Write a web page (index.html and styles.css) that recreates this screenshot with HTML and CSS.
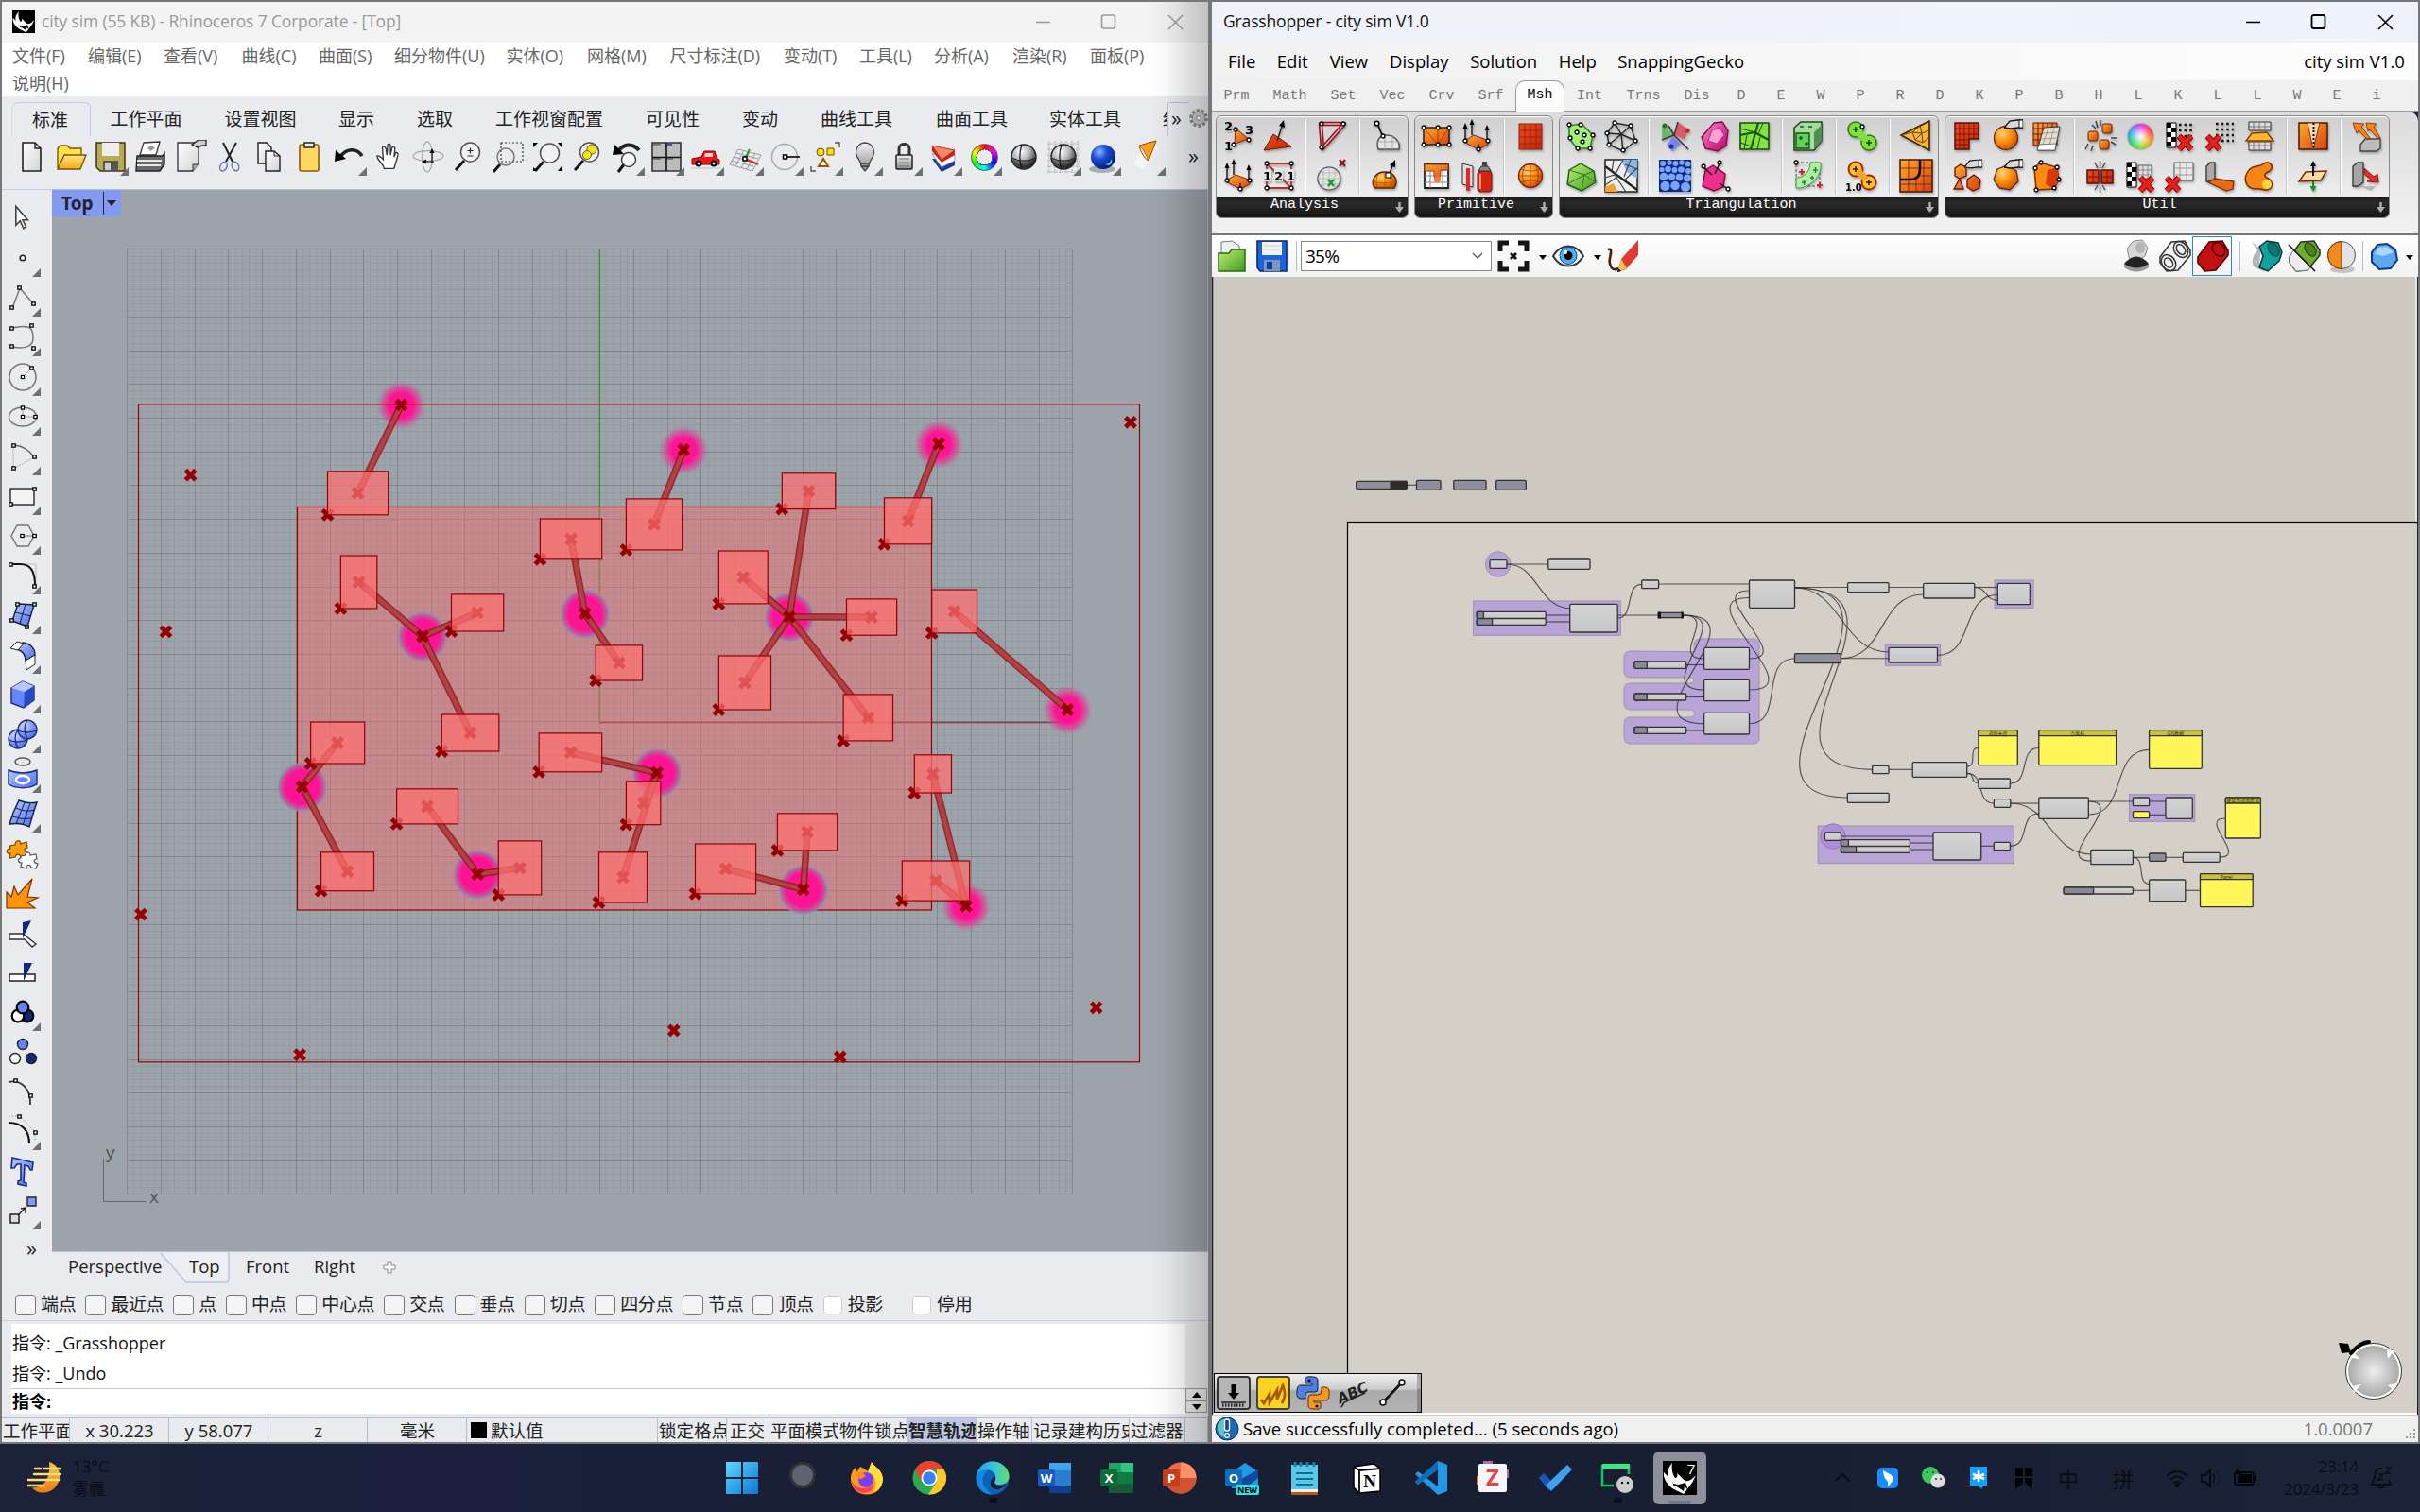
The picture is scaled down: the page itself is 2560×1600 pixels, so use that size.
FILE: index.html
```html
<!DOCTYPE html>
<html lang="zh-CN">
<head>
<meta charset="utf-8">
<title>Rhinoceros 7 + Grasshopper</title>
<link rel="stylesheet" href="styles.css">
</head>
<body>
<svg class="sprite" aria-hidden="true">
<defs>
<linearGradient id="gPage" x1="0" y1="0" x2="1" y2="1"><stop offset="0" stop-color="#fff"/><stop offset="1" stop-color="#d2d3d3"/></linearGradient>
<linearGradient id="gGold" x1="0" y1="0" x2="0" y2="1"><stop offset="0" stop-color="#ffe680"/><stop offset="1" stop-color="#f3a81a"/></linearGradient>
<linearGradient id="gOr" x1="0" y1="0" x2="1" y2="1"><stop offset="0" stop-color="#ffab2e"/><stop offset="1" stop-color="#d8400c"/></linearGradient>
<linearGradient id="gRed" x1="0" y1="0" x2="1" y2="1"><stop offset="0" stop-color="#f04a10"/><stop offset="1" stop-color="#c42a04"/></linearGradient>
<linearGradient id="gMetal" x1="0" y1="0" x2="0" y2="1"><stop offset="0" stop-color="#f2f2f2"/><stop offset="1" stop-color="#8d8d8d"/></linearGradient>
<linearGradient id="gBlue" x1="0" y1="0" x2="1" y2="1"><stop offset="0" stop-color="#b6c6ff"/><stop offset="1" stop-color="#4a6ef0"/></linearGradient>
<linearGradient id="gGreen" x1="0" y1="0" x2="1" y2="1"><stop offset="0" stop-color="#bff07a"/><stop offset="1" stop-color="#3f9c1e"/></linearGradient>
<linearGradient id="gPink" x1="0" y1="0" x2="1" y2="1"><stop offset="0" stop-color="#ff8cc8"/><stop offset="1" stop-color="#b30066"/></linearGradient>
<linearGradient id="gWin" x1="0" y1="0" x2="1" y2="1"><stop offset="0" stop-color="#5fd6ff"/><stop offset="1" stop-color="#0a78d4"/></linearGradient>
<linearGradient id="gMoon" x1="0" y1="0" x2="0" y2="1"><stop offset="0" stop-color="#f6c544"/><stop offset="1" stop-color="#f07a16"/></linearGradient>
<linearGradient id="gEdge" x1="0" y1="0" x2="1" y2="0"><stop offset="0" stop-color="#1f9be4"/><stop offset=".5" stop-color="#35c3e8"/><stop offset="1" stop-color="#66e05a"/></linearGradient>
<radialGradient id="sGrey" cx=".38" cy=".28" r=".72"><stop offset="0" stop-color="#fff"/><stop offset=".5" stop-color="#b5b5b5"/><stop offset="1" stop-color="#2a2a2a"/></radialGradient>
<radialGradient id="sBlue" cx=".35" cy=".3" r=".75"><stop offset="0" stop-color="#8fb4ff"/><stop offset=".4" stop-color="#1c4fd6"/><stop offset="1" stop-color="#041a70"/></radialGradient>
<radialGradient id="sOr" cx=".35" cy=".3" r=".75"><stop offset="0" stop-color="#ffd27a"/><stop offset=".45" stop-color="#ff9712"/><stop offset="1" stop-color="#c95000"/></radialGradient>
<radialGradient id="sPeri" cx=".35" cy=".3" r=".8"><stop offset="0" stop-color="#d0daff"/><stop offset="1" stop-color="#3a5ce0"/></radialGradient>

<symbol id="rhino" viewBox="0 0 36 36"><path d="M0 0h36v36H0z"/><path fill="#fff" d="M10 2C5 8 4 13 6 17L1 12c-1 6 3 12 9 17l12 6 9-12 4-8c-4 4-7 7-11 6-3-1-5-5-9-8 1 3 0 5-2 5-3-4-4-10-3-16z"/><path d="m9 20 3 7 4-2-5-1zM13 26l9 6 1-5 4 4-3-8z"/></symbol>
<symbol id="new" viewBox="0 0 36 36"><path d="M9 3h13l6 6v24H9z" fill="url(#gPage)" stroke="#222" stroke-width="1.6"/><path d="M22 3v6h6" fill="none" stroke="#222" stroke-width="1.4"/></symbol>
<symbol id="open" viewBox="0 0 36 36"><path d="M4 30V9l3-3h7l3 3h12v6" fill="#ffe14a" stroke="#7a5500" stroke-width="1.4"/><path d="M4 31 11 16h23l-6 15z" fill="url(#gGold)" stroke="#7a5500" stroke-width="1.4"/></symbol>
<symbol id="save" viewBox="0 0 36 36"><path d="M3 3h30v30H7l-4-4z" fill="#b8ab52" stroke="#3d3510" stroke-width="1.5"/><path d="M9 3h18v14H9z" fill="#eee"/><path d="M10 22h16v11H10z" fill="#565656"/><path d="M12 24h6v8h-6z" fill="#ccc"/></symbol>
<symbol id="print" viewBox="0 0 36 36"><path d="m11 3 17-1-4 14H7z" fill="#fff" stroke="#333" stroke-width="1.3"/><path d="m15 8 5-2 3 3-5 3z" fill="#999"/><path d="M4 17h27l2-3v12l-5 7H3z" fill="#6a6a6a" stroke="#222" stroke-width="1.4"/><path d="M4 22h26M4 27h25" stroke="#e7e7e7" stroke-width="2"/></symbol>
<symbol id="notes" viewBox="0 0 36 36"><path d="M5 3h22v22l-6 8H5z" fill="url(#gPage)" stroke="#333" stroke-width="1.3"/><path d="M21 33v-7h6" fill="#aaa" stroke="#333"/><path d="m20 5 7-5h8v6h-4l-5 2z" fill="#ccc" stroke="#222" stroke-width="1.3"/></symbol>
<symbol id="cut" viewBox="0 0 36 36"><path d="m11 3 10 20M25 3 14 23" stroke="#222" stroke-width="2"/><ellipse cx="11.500" cy="28" rx="3.500" ry="5" transform="rotate(25 11 28)" fill="none" stroke="#6878b0" stroke-width="1.500"/><ellipse cx="24" cy="28" rx="3.500" ry="5" transform="rotate(-25 24 28)" fill="none" stroke="#6878b0" stroke-width="1.500"/></symbol>
<symbol id="copy" viewBox="0 0 36 36"><path d="M6 3h9l5 5v17H6z" fill="url(#gPage)" stroke="#222" stroke-width="1.4"/><path d="M14 12h9l6 5v16H14z" fill="url(#gPage)" stroke="#222" stroke-width="1.4"/><path d="M23 12v5h6" fill="none" stroke="#222"/></symbol>
<symbol id="paste" viewBox="0 0 36 36"><rect x="8" y="5" width="20" height="28" rx="2" fill="#ffd765" stroke="#8a5c00" stroke-width="1.6"/><path d="M13 8V3h10v5z" fill="#eee" stroke="#222" stroke-width="1.4"/></symbol>
<symbol id="undo" viewBox="0 0 36 36"><path d="M9 18C15 9 26 8 32 17" fill="none" stroke="#222" stroke-width="3.600"/><path d="m3 23 1-12 11 9z"/></symbol>
<symbol id="hand" viewBox="0 0 36 36"><path d="M12 32c-1-6-7-8-8-14 3-1 5 2 7 4l-1-14c2-2 3 0 4 2l1 7 1-12c2-1 3 0 3 2v10l2-9c2-1 3 0 3 2l-1 9 2-5c2 0 3 1 2 4-1 6-3 9-4 14z" transform="translate(2 0) scale(.95)" fill="#fff" stroke="#333" stroke-width="1.400"/></symbol>
<symbol id="orbit" viewBox="0 0 36 36"><g fill="none" stroke="#aaa" stroke-width="1.300"><ellipse cx="18" cy="17" rx="16" ry="5.500"/><ellipse cx="17" cy="18" rx="5.500" ry="16"/></g><path d="M22 13v12M15 23h9" stroke="#111" stroke-width="1.200"/><path d="m22 9 2.500 5h-5zM11 23l5-2.500v5z"/></symbol>
<symbol id="mag" viewBox="0 0 36 36"><path d="M14 22 5 32" stroke="#111" stroke-width="2.800"/><circle cx="20.500" cy="13" r="10" fill="#f2f2f4" stroke="#555" stroke-width="1.500"/></symbol>
<symbol id="zoomd" viewBox="0 0 36 36"><use href="#mag"/><path d="M17.500 11.500h6M20.500 8.500v6M17.500 17h6" stroke="#222" stroke-width="1.200"/></symbol>
<symbol id="zoomw" viewBox="0 0 36 36"><path d="M11 3h23v20H11z" fill="none" stroke="#333" stroke-width="1.200" stroke-dasharray="2 2"/><path d="M10 26 3 34" stroke="#111" stroke-width="2.800"/><circle cx="16" cy="18" r="9" fill="none" stroke="#777" stroke-width="1.500"/></symbol>
<symbol id="zoome" viewBox="0 0 36 36"><use href="#mag" transform="translate(0 1)"/><path d="M3 8V3h5zM29 3h4v5zM3 29v4h5zM29 33h4v-5z"/></symbol>
<symbol id="zooms" viewBox="0 0 36 36"><use href="#mag"/><circle cx="23" cy="10" r="5" fill="#ffe600" stroke="#555"/><circle cx="18" cy="16" r="4.500" fill="#ffe600" stroke="#555"/></symbol>
<symbol id="zoomu" viewBox="0 0 36 36"><path d="M9 12C15 4 24 3 31 11" fill="none" stroke="#222" stroke-width="4"/><path d="M3 16 5 5l10 10z"/><path d="m15 26-6 8" stroke="#111" stroke-width="3"/><circle cx="20" cy="21" r="7.500" fill="#fff" stroke="#444" stroke-width="1.500"/></symbol>
<symbol id="grid4" viewBox="0 0 36 36"><path d="M3 3h30v30H3z" fill="#bcbcbc" stroke="#333" stroke-width="1.600"/><path d="M18 3v30M3 18.500h30" stroke="#111" stroke-width="1.600"/><path d="M4 5h8M4 20h8M19 20h6" stroke="#333" stroke-width="1.200"/><path d="M19 5h5" stroke="#2030c0" stroke-width="1.600"/></symbol>
<symbol id="car" viewBox="0 0 36 36"><path d="M3 26v-6l10-2 3-6h11l2 7 3 2v5z" fill="#ee1616" stroke="#880000"/><circle cx="10" cy="25" r="3.500"/><circle cx="26" cy="25" r="3.500"/><circle cx="10" cy="25" r="1.500" fill="#ddd"/><circle cx="26" cy="25" r="1.500" fill="#ddd"/><path d="M17 14h8v4h-9z" fill="#ffd0d0"/><path d="M2 30h32" stroke="#ccc" stroke-width="1.500"/></symbol>
<symbol id="cplane" viewBox="0 0 36 36"><path d="m10 10 24 6-9 17L1 26zM8 14l23 6M5 18l23 6M3 22l23 6M16 11 7 28M22 13l-9 17M28 14l-9 17" fill="none" stroke="#999"/><path d="m17 20 5-10" stroke="#2b9a2b" stroke-width="2"/><path d="m17 20 14 6" stroke="#d22" stroke-width="2"/><path d="M15 18h4v4h-4z" fill="#fff" stroke="#000" stroke-width="1.500"/></symbol>
<symbol id="cirr" viewBox="0 0 36 36"><circle cx="17" cy="18" r="13.500" fill="none" stroke="#aaa" stroke-width="1.500"/><path d="M19 18h14" stroke="#000" stroke-width="1.600"/><path d="M15.500 16h4v4h-4z" fill="#fff" stroke="#000" stroke-width="1.500"/></symbol>
<symbol id="sel" viewBox="0 0 36 36"><path d="M28 3h5v5M3 28v5h5" fill="none" stroke="#555" stroke-width="1.400"/><circle cx="13" cy="13" r="4" fill="#ffe000" stroke="#7a4a00"/><path d="M20 9h7v7h-7z" fill="#ffe000" stroke="#7a4a00"/><path d="m16 20 5 8H11z" fill="#fff" stroke="#a05000" stroke-width="2"/></symbol>
<symbol id="bulb" viewBox="0 0 36 36"><path d="M18 3a10 10 0 0 1 9 13c-1 4-5 6-5 12l-4 5-4-5c0-6-4-8-5-12A10 10 0 0 1 18 3z" fill="url(#gMetal)" stroke="#444" stroke-width="1.300"/><path d="M14 25h8M14 28h8" stroke="#333" stroke-width="1.400"/></symbol>
<symbol id="lock" viewBox="0 0 36 36"><path d="M12 16V9c0-6 11-6 11 0v7" fill="none" stroke="#333" stroke-width="3"/><rect x="9" y="16" width="17" height="15" rx="1" fill="url(#gMetal)" stroke="#222" stroke-width="1.500"/><path d="M12 20h11M12 24h11M12 28h11" stroke="#777"/></symbol>
<symbol id="layers" viewBox="0 0 36 36"><path d="m5 20 10 14 14-7v-6z" fill="#1a3ba8"/><path d="m5 15 10 14 14-7v-6z" fill="#fff" stroke="#888" stroke-width=".8"/><path d="m5 6 24 5v5l-14 8L5 12z" fill="#c22"/><path d="m5 6 24 5-14 10z" fill="#ff8660" stroke="#a22" stroke-width=".8"/></symbol>
<symbol id="sph" viewBox="0 0 36 36"><circle cx="18" cy="18" r="13" fill="url(#sGrey)" stroke="#222" stroke-width="1.400"/><path d="M5 19c8 4 18 4 26 0M16 5c-3 9-3 17 0 26" fill="none" stroke="#222" stroke-width="1.300"/><path d="M5.500 20c8 4 17 4 25 0a13 13 0 0 1-25 0z" fill="#0005"/></symbol>
<symbol id="sphg" viewBox="0 0 36 36"><path d="M1 4h34M1 10h34M1 16h34M1 22h34M1 28h34M1 34h34M3 1v34M9 1v34M15 1v34M21 1v34M27 1v34M33 1v34" stroke="#aaa" stroke-dasharray="2 1"/><use href="#sph"/></symbol>
<symbol id="sphb" viewBox="0 0 36 36"><ellipse cx="17" cy="31" rx="14" ry="4" fill="#0004"/><circle cx="18" cy="18" r="13" fill="url(#sBlue)"/><path d="M20 26c4 0 6-3 7-6 1 6-2 8-7 6z" fill="#7fd0ff"/></symbol>
<symbol id="spot" viewBox="0 0 36 36"><path d="M8 28 25 4" stroke="#fff8" stroke-width="12"/><path d="m9 6 18-5-8 21c-5-3-8-9-10-16z" fill="#ff9d1e" stroke="#8a4a00"/><path d="M9 6q5 4 10 16c-5-3-8-9-10-16z" fill="#fff" stroke="#8a4a00" stroke-width=".8"/></symbol>

<symbol id="arrow" viewBox="0 0 36 36"><path d="M12 6v22l5-5 4 9 3-2-4-8h6z" transform="scale(.9)" fill="#fff" stroke="#444" stroke-width="1.800"/></symbol>
<symbol id="pt" viewBox="0 0 36 36"><circle cx="18" cy="18" r="2.800" fill="#fff" stroke="#222" stroke-width="1.600"/></symbol>
<symbol id="h" viewBox="0 0 5 5"><path d="M.8.8h3.400v3.400H.8z" fill="#fff" stroke="#000" stroke-width="1.300"/></symbol>
<symbol id="pline" viewBox="0 0 36 36"><path d="M7 29 15 8l14 16" fill="none" stroke="#777" stroke-width="1.500"/><use href="#h" x="4" y="26" width="5" height="5"/><use href="#h" x="12" y="5" width="5" height="5"/><use href="#h" x="27" y="22" width="5" height="5"/></symbol>
<symbol id="crv" viewBox="0 0 36 36"><path d="M7 8c22-5 22 3 22 11s-8 12-22 9" fill="none" stroke="#777" stroke-width="1.500"/><use href="#h" x="4" y="6" width="5" height="5"/><use href="#h" x="25" y="3" width="5" height="5"/><use href="#h" x="4" y="25" width="5" height="5"/><use href="#h" x="27" y="27" width="5" height="5"/></symbol>
<symbol id="circ" viewBox="0 0 36 36"><circle cx="18" cy="18" r="14" fill="none" stroke="#777" stroke-width="1.500"/><path d="m18 18 8-8" stroke="#aaa"/><use href="#h" x="15.500" y="15.500" width="5" height="5"/><use href="#h" x="25" y="6" width="5" height="5"/></symbol>
<symbol id="ell" viewBox="0 0 36 36"><ellipse cx="18" cy="18" rx="14.500" ry="10" fill="none" stroke="#777" stroke-width="1.500"/><path d="M18 8v10h14" fill="none" stroke="#aaa"/><use href="#h" x="15.500" y="15.500" width="5" height="5"/><use href="#h" x="15.500" y="6" width="5" height="5"/><use href="#h" x="29" y="15.500" width="5" height="5"/></symbol>
<symbol id="arc" viewBox="0 0 36 36"><path d="M9 6c10 1 16 5 21 13" fill="none" stroke="#666" stroke-width="1.500"/><path d="M8 6v25l22-12" fill="none" stroke="#bbb"/><use href="#h" x="6" y="4" width="5" height="5"/><use href="#h" x="28" y="16" width="5" height="5"/><use href="#h" x="6" y="28" width="5" height="5"/></symbol>
<symbol id="rect" viewBox="0 0 36 36"><path d="M5 10h25v17H5z" fill="#f4f4f4" stroke="#333" stroke-width="1.500"/><use href="#h" x="28" y="8" width="5" height="5"/><use href="#h" x="3" y="24" width="5" height="5"/></symbol>
<symbol id="poly" viewBox="0 0 36 36"><path d="m6 18 6-11h12l6 11-6 11H12z" fill="none" stroke="#777" stroke-width="1.500"/><path d="M18 18h12" stroke="#777"/><use href="#h" x="15" y="15.500" width="5" height="5"/><use href="#h" x="28" y="15.500" width="5" height="5"/></symbol>
<symbol id="fil" viewBox="0 0 36 36"><path d="M6 6h26v24" fill="none" stroke="#bbb"/><path d="M6 6h9c12 0 16 8 16 23" fill="none" stroke="#111" stroke-width="2"/><use href="#h" x="3" y="4" width="5" height="5"/><use href="#h" x="28" y="27" width="5" height="5"/></symbol>
<symbol id="srf" viewBox="0 0 36 36"><path d="m13 6 17 1-7 23-16-6z" fill="url(#gBlue)" stroke="#123" stroke-width="1.400"/><path d="m21 6-6 21M10 15l17 4" stroke="#124"/><use href="#h" x="10" y="4" width="5" height="5"/><use href="#h" x="28" y="4" width="5" height="5"/><use href="#h" x="4" y="21" width="5" height="5"/><use href="#h" x="20" y="28" width="5" height="5"/></symbol>
<symbol id="srf2" viewBox="0 0 36 36"><path d="M18 5c8 1 13 6 13 13l-10 6c0-6-3-10-9-12z" fill="url(#gBlue)" stroke="#222" stroke-width="1.400"/><path d="m12 4 7 2-6 7-8-2z" fill="#fff" stroke="#222"/><path d="m21 24 10-6v10l-9 6z" fill="#fff" stroke="#222"/></symbol>
<symbol id="box" viewBox="0 0 36 36"><path d="m6 11 12-7 12 5v15l-11 8-13-5z" fill="#6584ff" stroke="#1b2c7d" stroke-width="1.400"/><path d="m6 11 12-7 12 5-10 6z" fill="#b8c6ff"/><path d="m20 15 10-6v15l-11 8z" fill="#2947c4"/></symbol>
<symbol id="bool" viewBox="0 0 36 36"><g stroke="#1b2c7d" stroke-width="1.300"><circle cx="13" cy="23" r="10" fill="url(#sPeri)"/><circle cx="23" cy="13" r="10" fill="url(#sPeri)"/><path d="M13 13q-6 9 0 20M3 24q9 4 20 0M23 3q-6 9 0 20M13 14q9 4 20 0" fill="none"/></g></symbol>
<symbol id="pipe" viewBox="0 0 36 36"><ellipse cx="18" cy="5" rx="8" ry="4" fill="none" stroke="#555" stroke-width="1.500"/><path d="M3 14c9 4 21 4 30 0v15c-9 5-21 5-30 0z" fill="url(#gBlue)" stroke="#1b2c7d" stroke-width="1.400"/><ellipse cx="18" cy="24" rx="7" ry="4" fill="#6584ff" stroke="#fff" stroke-width="2.400"/></symbol>
<symbol id="msh" viewBox="0 0 36 36"><path d="M14 4q10 4 19 2l-3 9-5 17q-9-5-21-3l4-12z" fill="url(#gBlue)" stroke="#123" stroke-width="1.400"/><path d="M20 6 11 29M26 7l-8 23M11 12q10 5 20 2M7 21q10 4 21 2" fill="none" stroke="#124"/></symbol>
<symbol id="puz" viewBox="0 0 36 36"><path d="m4 10 6-1c0-5 6-6 6-1l6-2 1 6c-4 0-4 5 0 5l-1 5-6 1c0-5-5-5-6-1l-6 1 1-5c-5 1-5-5 0-5z" fill="#ff9d0a" stroke="#6b4300" stroke-width="1.200"/><path d="m16 21 5-1c0-4 5-4 5 0l6-1 1 5c-4 0-4 4 1 5l-2 5-5-1c-1-4-6-3-5 1l-6-2 1-4c-4 0-5-4-1-5z" fill="#fff" stroke="#555" stroke-width="1.200"/></symbol>
<symbol id="expl" viewBox="0 0 36 36"><path d="M1 34V17l5 5 3-11 4 9L28 3l-5 19 11 1-11 5 8 6z" fill="#ff9208" stroke="#7a3000" stroke-width="1.200"/></symbol>
<symbol id="trim" viewBox="0 0 36 36"><path d="M4 19h14l14 11-4 3-8-8H4z" fill="#fff" stroke="#333" stroke-width="1.400"/><path d="M18 24V7l9-2z" fill="#10287c"/></symbol>
<symbol id="split" viewBox="0 0 36 36"><path d="M4 20h27v7H4z" fill="#fff" stroke="#222" stroke-width="1.500"/><path d="M19 27V8h9z" fill="#10287c"/></symbol>
<symbol id="uni" viewBox="0 0 36 36"><g stroke="#000" stroke-width="2.200"><circle cx="23" cy="22" r="6.300" fill="#10287c"/><circle cx="13" cy="22" r="6.300" fill="#fff"/><circle cx="18" cy="13" r="6.300" fill="#6584ff"/></g></symbol>
<symbol id="dots" viewBox="0 0 36 36"><g stroke="#222" stroke-width="1.400"><circle cx="27" cy="25" r="5.500" fill="#10287c"/><circle cx="10" cy="25" r="5.500" fill="#fff"/><circle cx="18" cy="10" r="5.500" fill="#6584ff"/></g></symbol>
<symbol id="pts" viewBox="0 0 36 36"><path d="M3 8c14-3 24 8 23 24" fill="none" stroke="#333" stroke-width="1.800"/><use href="#h" x="8" y="4" width="5" height="5"/><use href="#h" x="24" y="20" width="5" height="5"/></symbol>
<symbol id="pts2" viewBox="0 0 36 36"><path d="M3 9c14 0 22 8 22 22" fill="none" stroke="#111" stroke-width="2.200"/><path d="M3 2h12l16 17v8" fill="none" stroke="#888" stroke-dasharray="1.500 2"/><use href="#h" x="12" y="0" width="5" height="5"/><use href="#h" x="29" y="17" width="5" height="5"/></symbol>
<symbol id="txt" viewBox="0 0 36 36"><path d="m7 4 22 5-1 8h-2l-2-4-4-1-1 18 3 1v3L13 32v-3l3-1V11h-4l-3 4H6z" fill="url(#gBlue)" stroke="#1b2c7d" stroke-width="1.600"/></symbol>
<symbol id="move" viewBox="0 0 36 36"><path d="M23 4h9v9h-9z" fill="#7f99ff" stroke="#222" stroke-width="1.400"/><path d="M5 22h9v9H5z" fill="#ddd" stroke="#222" stroke-width="1.500"/><path d="m13 23 8-8m-5 1 5-1v6" fill="none" stroke="#222" stroke-width="1.400"/></symbol>

<symbol id="n" viewBox="0 0 6 6"><circle cx="3" cy="3" r="2" fill="#fff" stroke="#000" stroke-width="1.300"/></symbol>
<symbol id="pen" viewBox="0 0 20 12"><path d="m0 9 6-7 8-1h6v8h-5l-8 1z" fill="#d8d8d8" stroke="#111" stroke-width="1.300"/><path d="M16 1h4v8h-4z" fill="#fff" stroke="#111"/></symbol>
<symbol id="a1" viewBox="0 0 36 36"><path d="m15 10 14 11-15 5z" fill="url(#gOr)" stroke="#822"/><use href="#n" x="12" y="8" width="6" height="6"/><use href="#n" x="26" y="19" width="6" height="6"/><use href="#n" x="10" y="24" width="6" height="6"/><text x="3" y="12" class="ticon">2</text><text x="25" y="16" class="ticon">3</text><text x="3" y="33" class="ticon">1</text></symbol>
<symbol id="a2" viewBox="0 0 36 36"><path d="m3 33 10-17 19 13z" fill="url(#gRed)" stroke="#611"/><path d="m17 23 6-18" stroke="#222" stroke-width="1.600"/><path d="m24 1-5 6 6 2z"/></symbol>
<symbol id="a3" viewBox="0 0 36 36"><path d="M6 5h25L8 31z" fill="#d6d6d6" stroke="#8c1420" stroke-width="4.500" stroke-linejoin="round"/><path d="M6 5h25L8 31z" fill="none" stroke="#f2b0b4" stroke-width="1.400"/><use href="#n" x="4" y="2" width="6" height="6"/><use href="#n" x="27" y="2" width="6" height="6"/><use href="#n" x="4" y="27" width="6" height="6"/></symbol>
<symbol id="a4" viewBox="0 0 36 36"><path d="M10 32c-3-10 2-15 9-15s15 6 13 15z" fill="#e4e4e4" stroke="#555" stroke-width="1.500"/><path d="M9 24h23M17 17v15M25 18v14" stroke="#aaa"/><path d="m10 7 5 12" stroke="#000" stroke-width="1.600"/><use href="#n" x="5" y="1" width="7" height="7"/><use href="#n" x="12" y="15" width="6" height="6"/></symbol>
<symbol id="a5" viewBox="0 0 36 36"><path d="m7 22 8-5 14 5 1 5-10 5-12-6z" fill="url(#gOr)" stroke="#722"/><path d="M6 23V9M13 17V4M29 22V10M20 30v-4" stroke="#222" stroke-width="1.500"/><path d="m3.500 10 2.500-6 2.500 6zM10.500 6 13 0l2.500 6zM26.500 12 29 6l2.500 6z"/><use href="#n" x="3" y="20" width="6" height="6"/><use href="#n" x="27" y="20" width="6" height="6"/><use href="#n" x="17" y="29" width="6" height="6"/></symbol>
<symbol id="a6" viewBox="0 0 36 36"><path d="M6 5h26v26H6zM6 5l26 26" fill="none" stroke="#b03030" stroke-width="1.800" /><path d="M2 11h9v13H2zM14 11h9v13h-9zM27 11h8v13h-8z" fill="#e4e4e4"/><use href="#n" x="3" y="2" width="6" height="6"/><use href="#n" x="29" y="2" width="6" height="6"/><use href="#n" x="3" y="28" width="6" height="6"/><use href="#n" x="29" y="28" width="6" height="6"/><text x="2" y="23" class="ticon">1</text><text x="14" y="23" class="ticon">2</text><text x="27" y="23" class="ticon">1</text></symbol>
<symbol id="a7" viewBox="0 0 36 36"><circle cx="15" cy="21" r="12" fill="#e2e2e2" stroke="#666" stroke-width="1.500"/><path d="M3 21h24M15 9v24M9 11v20M21 11v20M5 15h20M5 27h20" stroke="#bbb"/><path d="m14 22 6 7m0-7-6 7" stroke="#1c9a2c" stroke-width="2.500"/><path d="m26 1 6 7m0-7-6 7" stroke="#8c1420" stroke-width="2.200"/></symbol>
<symbol id="a8" viewBox="0 0 36 36"><path d="M6 31c-5-9 2-17 11-17 10 0 15 9 10 17z" fill="url(#sOr)" stroke="#5a2500" stroke-width="1.500"/><path d="M4 24q12 4 25 0M17 14v17M10 16q-4 8 0 15M24 16q3 8 0 15" fill="none" stroke="#a35400" stroke-width=".8"/><path d="m21 18 5-13" stroke="#111" stroke-width="1.600"/><path d="m28 1-6 6 6 2z"/><path d="M18 15h5v5h-5z" fill="#fff" stroke="#000"/></symbol>
<symbol id="p1" viewBox="0 0 36 36"><path d="M4 9h27v18H4z" fill="url(#gOr)" stroke="#222" stroke-width="1.500"/><path d="M19 9v18M4 9l15 18M19 27 31 9" stroke="#a40" /><use href="#n" x="1" y="6" width="6" height="6"/><use href="#n" x="16" y="6" width="6" height="6"/><use href="#n" x="28" y="6" width="6" height="6"/><use href="#n" x="1" y="24" width="6" height="6"/><use href="#n" x="16" y="24" width="6" height="6"/><use href="#n" x="28" y="24" width="6" height="6"/></symbol>
<symbol id="p2" viewBox="0 0 36 36"><rect x="6" y="5" width="24" height="27" fill="url(#gRed)" stroke="#822"/><path d="M12 5v27M18 5v27M24 5v27M6 12h24M6 19h24M6 26h24" stroke="#922"/></symbol>
<symbol id="p3" viewBox="0 0 36 36"><path d="M5 6h25v25H5z" fill="#fff" stroke="#222" stroke-width="1.800"/><path d="M11 6v25M24 6v25M5 12h25M5 18h25M5 25h25" stroke="#888"/><path d="M5 6h25v6h-8c0 14-8 14-7 1H5z" fill="url(#gOr)" stroke="#932"/><circle cx="18.500" cy="22" r="3.500" fill="#f73"/></symbol>
<symbol id="p4" viewBox="0 0 36 36"><path d="m3 5 11 3v22l-11-3z" fill="#ddd" stroke="#333"/><path d="M9 10v24" stroke="#e22" stroke-width="4"/><rect x="19" y="13" width="15" height="22" rx="3" fill="#d42410" stroke="#711"/><path d="m20 13 3-5h7l3 5z" fill="#888" stroke="#333"/><path d="M24 8V3h5v5z" fill="#444"/><path d="M22 16v16" stroke="#f98" stroke-width="2"/></symbol>
<symbol id="p5" viewBox="0 0 36 36"><circle cx="18" cy="18" r="12.500" fill="url(#sOr)" stroke="#722" stroke-width="1.400"/><path d="M6 18h24M18 6v24M8 11q10 4 20 0M8 25q10-4 20 0M12 8q-5 10 0 20M24 8q5 10 0 20" fill="none" stroke="#a30" stroke-width=".8"/></symbol>
<symbol id="t1" viewBox="0 0 36 36"><path d="M5 7 18 5l12 12-3 14H13L5 20z" fill="#a2ef7c" stroke="#2c8020" stroke-width="1.500"/><g><use href="#n" x="2" y="3" width="6" height="6"/><use href="#n" x="14" y="3" width="6" height="6"/><use href="#n" x="27" y="14" width="6" height="6"/><use href="#n" x="24" y="28" width="6" height="6"/><use href="#n" x="11" y="28" width="6" height="6"/><use href="#n" x="3" y="17" width="6" height="6"/><use href="#n" x="10" y="11" width="6" height="6"/><use href="#n" x="18" y="14" width="6" height="6"/><use href="#n" x="16" y="21" width="6" height="6"/></g></symbol>
<symbol id="t2" viewBox="0 0 36 36"><path d="M11 4 28 7l5 16-13 11L5 27 3 15zM18 16l10-9M18 16l15 7M18 16l2 18M18 16 5 27M18 16 3 15M18 16 11 4" fill="none" stroke="#222" stroke-width="1.400"/><use href="#n" x="8" y="1" width="6" height="6"/><use href="#n" x="25" y="4" width="6" height="6"/><use href="#n" x="30" y="20" width="6" height="6"/><use href="#n" x="17" y="30" width="6" height="6"/><use href="#n" x="2" y="24" width="6" height="6"/><use href="#n" x="0" y="12" width="6" height="6"/></symbol>
<symbol id="t3" viewBox="0 0 36 36"><path d="M4 6l13 10L4 21z" fill="#5b5" opacity=".8"/><path d="m17 16 4-13 11 8-4 11z" fill="#e24a5a" opacity=".8"/><path d="m16 18 8 8-9 8-6-7z" fill="#6a7cf0" opacity=".8"/><path d="m21 3-4 14L4 22M17 17l15 15M17 17l-6-10" stroke="#333" stroke-width="1.500" fill="none"/><circle cx="7" cy="7" r="2.500" fill="#1c7a1c"/><circle cx="31" cy="12" r="2.500" fill="#c22"/><circle cx="14" cy="29" r="2.500" fill="#22b"/></symbol>
<symbol id="t4" viewBox="0 0 36 36"><path d="m17 4 9-1 6 9-2 16-9 6-13-3-4-12z" fill="url(#gPink)" stroke="#8a004c" stroke-width="1.300"/><path d="m15 12 8-3 5 8-8 9-9-3z" fill="#ff9fd3" stroke="#c2287c"/></symbol>
<symbol id="t5" viewBox="0 0 36 36"><path d="M3 4h30v28H3z" fill="#82e33a" stroke="#1c4a10" stroke-width="1.600"/><path d="M22 4 14 32M3 17l15-3 15 8" fill="none" stroke="#185010" stroke-width="2.200"/><path d="m3 10 16 4M10 17l-3 15M27 4l-5 12M24 19l-3 13M3 25l12 4" fill="none" stroke="#185010" stroke-width="1"/></symbol>
<symbol id="t6" viewBox="0 0 36 36"><path d="M5 12 17 5l14 8 2 12-15 9L3 27z" fill="url(#gGreen)" stroke="#1d5c10" stroke-width="1.400"/><path d="m5 12 16 5 10-4M21 17l-3 17M3 27l18-10 12 8" fill="none" stroke="#2b7a18"/></symbol>
<symbol id="t7" viewBox="0 0 36 36"><path d="M1 1h34v34H1z" fill="#eee" stroke="#222" stroke-width="1.500"/><path d="M18 1h17v20L24 14zM28 27l7 8" fill="#87b4ea"/><path d="m1 30 9-4 4 9H1z" fill="#f3a02c"/><path d="m1 8 34 25" stroke="#222" stroke-width="2.400"/><path d="M10 1 8 14M20 1l-8 15M35 10 22 22M1 20l10-3 12 18M1 28l13-9M28 1l-7 18M22 6l13 5" fill="none" stroke="#444" stroke-width="1.200"/></symbol>
<symbol id="t8" viewBox="0 0 36 36"><path d="M1 1h34v34H1z" fill="#0a2a8a"/><g fill="#7ba4f6"><circle cx="5" cy="5" r="3"/><circle cx="12" cy="4" r="2.700"/><circle cx="18.500" cy="5" r="3"/><circle cx="25" cy="4" r="2.700"/><circle cx="31.500" cy="5.500" r="3"/><circle cx="4" cy="11.500" r="2.600"/><circle cx="10.500" cy="11" r="3.300"/><circle cx="17.500" cy="12" r="3"/><circle cx="24.500" cy="11.500" r="3.300"/><circle cx="32" cy="13" r="3"/><circle cx="6" cy="19" r="4.300"/><circle cx="14.500" cy="19" r="3.600"/><circle cx="22.500" cy="19.500" r="3.800"/><circle cx="31" cy="20.500" r="4"/><circle cx="7.500" cy="29" r="5"/><circle cx="18" cy="28.500" r="4.700"/><circle cx="29" cy="30" r="5"/></g></symbol>
<symbol id="t9" viewBox="0 0 36 36"><path d="m8 12 8-5 13 9-2 14-10 4-12-5z" fill="#ef2f8e" stroke="#8a004c" stroke-width="1.400"/><path d="m15 17-9-8M18 16l5-11M23 26l9 6" stroke="#111" stroke-width="1.500"/><use href="#n" x="3" y="5" width="6" height="6"/><use href="#n" x="20" y="1" width="6" height="6"/><use href="#n" x="29" y="29" width="6" height="6"/></symbol>
<symbol id="t10" viewBox="0 0 36 36"><path d="M3 9 10 3h22v20l-8 10H3z" fill="#a5dc9c" stroke="#1d4a18" stroke-width="1.600"/><path d="m24 14 8-8v17l-8 9z" fill="#4f8f54"/><path d="M5 15h14v16H5z" fill="#66cf5a" stroke="#1d4a18" stroke-width="1.400"/><path d="M9 8h4M18 8h4M8 20h4M10 18v4M14 26h4M16 24v4" stroke="#062" stroke-width="1.500"/></symbol>
<symbol id="t11" viewBox="0 0 36 36"><path d="M5 4h25v25H5z" fill="none" stroke="#444" stroke-dasharray="3 2"/><path d="M20 4h11c2 15-12 28-26 27V20C14 20 20 13 20 4z" fill="#b2ee9e" stroke="#396"/><path d="M8 14h6M11 11v6M27 28h6M30 25v6" stroke="#d22" stroke-width="2"/><path d="M23 12h5M25.500 9v6M11 25h5M13.500 22v6M20 20h4M22 18v4" stroke="#183" stroke-width="1.400"/><use href="#n" x="2" y="1" width="6" height="6"/></symbol>
<symbol id="t12" viewBox="0 0 36 36"><g stroke="#2a7a10" stroke-width="1.500" fill="#7fe23a"><circle cx="11" cy="11" r="8"/><circle cx="25" cy="25" r="8"/></g><path d="m13 13 9 9" stroke="#7fe23a" stroke-width="8"/><path d="M8 11h6M11 8v6M22 25h6M25 22v6" stroke="#142" stroke-width="1.600"/><use href="#n" x="15" y="5" width="6" height="6"/></symbol>
<symbol id="t13" viewBox="0 0 36 36"><circle cx="11" cy="11" r="7.500" fill="#ffc526" stroke="#b01c00" stroke-width="1.800"/><circle cx="25" cy="25" r="7.500" fill="#ffc526" stroke="#b01c00" stroke-width="1.800"/><path d="m13 13 9 9" stroke="#f9a31c" stroke-width="7"/><path d="M8 11h6M11 8v6M22 25h6M25 22v6" stroke="#411" stroke-width="1.600"/><text x="0" y="34" class="tsm">1.0</text></symbol>
<symbol id="t14" viewBox="0 0 36 36"><path d="M2 17 32 2v31z" fill="#f8b53c" stroke="#3c2400" stroke-width="1.600"/><path d="m2 17 12-3 8-7 2 8 8-3M14 14l3 8 8 3 7-6M17 22l7-7 1 10M14 14l10 1" fill="none" stroke="#6b4000"/></symbol>
<symbol id="t15" viewBox="0 0 36 36"><path d="M1 1h34v34H1z" fill="url(#gOr)" stroke="#4a1800" stroke-width="1.500"/><path d="M10 1v34M26 1v34M1 10h34M1 27h34M18 20v15M20 18h15" stroke="#722" stroke-width=".9"/><path d="M1 22h11q10 0 10-11V1" fill="none" stroke="#1a0a00" stroke-width="2.600"/></symbol>
<symbol id="u1" viewBox="0 0 36 36"><path d="M5 4h25v17H20v11H5z" fill="url(#gRed)" stroke="#511" stroke-width="1.500"/><path d="M10 4v28M15 4v28M20 4v17M25 4v17M5 10h25M5 16h25M5 22h15M5 27h15" stroke="#611" stroke-width=".9"/></symbol>
<symbol id="u2" viewBox="0 0 36 36"><circle cx="17" cy="20" r="12.500" fill="url(#sOr)" stroke="#622" stroke-width="1.300"/><use href="#pen" x="15" y="0" width="20" height="12"/></symbol>
<symbol id="u3" viewBox="0 0 36 36"><path d="M4 4h25v24H4z" fill="url(#gOr)" stroke="#511"/><path d="M9 4v24M14 4v24M19 4v24M24 4v24M4 10h25M4 16h25M4 22h25" stroke="#611"/><path d="m15 9 17-1-5 25H8z" fill="#e6ddd6" stroke="#333"/><path d="m14 15 17-1M12 21l18-1M20 9l-6 18M26 9l-5 18" stroke="#a98"/><path d="m10 27 18-1-1 7H8z" fill="#fff" stroke="#555" stroke-width=".8"/></symbol>
<symbol id="u4" viewBox="0 0 36 36"><g fill="url(#gOr)" stroke="#5a2400"><rect x="20" y="5" width="10" height="10" rx="2"/><rect x="5" y="13" width="10" height="10" rx="2"/><rect x="17" y="22" width="10" height="10" rx="2"/></g><path d="m13 2 2 7M18 1v6M5 26l-3 6M10 28l-2 6M29 20h6M29 24l5 3M9 6l4 4" stroke="#444" stroke-width="1.500"/></symbol>
<symbol id="rx" viewBox="0 0 36 36"><path d="m17 18 13 14M30 18 17 32" stroke="#8e0000" stroke-width="6.500"/><path d="m17 18 13 14M30 18 17 32" stroke="#e8201a" stroke-width="4.500"/></symbol>
<symbol id="chk" viewBox="0 0 36 36"><path d="M4 4h10v26H4z" fill="#fff" stroke="#000"/><path d="M4 4h5v5H4zM9 9h5v5H9zM4 14h5v5H4zM9 19h5v5H9zM4 24h5v5H4z"/></symbol>
<symbol id="u6" viewBox="0 0 36 36"><use href="#chk"/><path d="M17 6h16M17 12h16M17 18h16" stroke="#111" stroke-width="2.600" stroke-dasharray="2.600 3"/><use href="#rx"/></symbol>
<symbol id="u7" viewBox="0 0 36 36"><path d="M14 5h19M14 11h19M14 17h19M20 23h13" stroke="#111" stroke-width="2.600" stroke-dasharray="2.600 3"/><use href="#rx" x="-12"/></symbol>
<symbol id="u8" viewBox="0 0 36 36"><path d="M7 3h23v9H7zM7 24h23v9H7z" fill="#ddd" stroke="#333"/><path d="M12 3v9M18 3v9M24 3v9M7 8h23M12 24v9M18 24v9M24 24v9M7 28h23" stroke="#777"/><path d="m10 15 16-1 7 9H4z" fill="#ffb52c" stroke="#8a3c00" stroke-width="1.500"/></symbol>
<symbol id="u9" viewBox="0 0 36 36"><path d="M3 4h30v28H3z" fill="url(#gOr)" stroke="#4a1800" stroke-width="1.500"/><path d="m12 4 6 28L25 4z" fill="#ffdca6" stroke="#832"/><path d="M18.500 4v28" stroke="#000" stroke-width="2" stroke-dasharray="2 2"/></symbol>
<symbol id="u10" viewBox="0 0 36 36"><path d="m11 27 5-6h16v10l-4 3H11z" fill="#bbb" stroke="#444" stroke-width="1.400"/><path d="m18 21-9-9-2 3-4-11 12 1-3 3 9 12zM29 20l-8-9-2 2-2-9 11 1-3 3 7 12z" fill="#f6861c" stroke="#8a3000" stroke-width=".9"/></symbol>
<symbol id="u11" viewBox="0 0 36 36"><path d="m5 10 6-4 6 3v9l-7 3-5-3zM10 21l4 11H4zM18 22l7-5 7 5-1 9-7 3-6-4z" fill="url(#gOr)" stroke="#611" stroke-width="1.300"/><use href="#pen" x="15" y="0" width="19" height="12"/></symbol>
<symbol id="u12" viewBox="0 0 36 36"><path d="m8 11 10-4 10 6 2 11-9 9-11-2-6-9z" fill="url(#sOr)" stroke="#622" stroke-width="1.300"/><use href="#pen" x="15" y="0" width="20" height="12"/></symbol>
<symbol id="u13" viewBox="0 0 36 36"><path d="m5 10 6-6 18 5 2 13-5 10-19 1z" fill="#ff8a12" stroke="#7a2c00" stroke-width="1.500"/><path d="m19 12 10-3 2 13-5 10-9-5z" fill="#d63a08"/><use href="#n" x="3" y="7" width="6" height="6"/><use href="#n" x="9" y="1" width="6" height="6"/><use href="#n" x="26" y="6" width="6" height="6"/><use href="#n" x="28" y="19" width="6" height="6"/><use href="#n" x="4" y="30" width="6" height="6"/><use href="#n" x="23" y="28" width="6" height="6"/></symbol>
<symbol id="u14" viewBox="0 0 36 36"><path d="M4 12h12v14H4zM19 12h12v14H19z" fill="url(#gRed)" stroke="#511" stroke-width="1.500"/><path d="M10 12v14M25 12v14M4 19h12M19 19h12" stroke="#711"/><path d="M17.500 2v8M12 4l3 6M23 4l-3 6M17.500 28v8M12 33l3-5M23 33l-3-5" stroke="#444" stroke-width="1.300"/></symbol>
<symbol id="u15" viewBox="0 0 36 36"><use href="#chk"/><path d="M16 7h14v14H16z" fill="#ddd" stroke="#555"/><path d="M21 7v14M26 7v14M16 12h14M16 17h14" stroke="#888"/><use href="#rx" x="1" y="2"/></symbol>
<symbol id="u16" viewBox="0 0 36 36"><path d="M12 4h20v19H12z" fill="#e8e8e8" stroke="#555"/><path d="M18 4v19M25 4v19M12 10h20M12 17h20" stroke="#999"/><use href="#rx" x="-13" y="2"/></symbol>
<symbol id="u17" viewBox="0 0 36 36"><path d="m4 8 4-4h5v17l-4 3H4z" fill="#aaa" stroke="#333" stroke-width="1.300"/><path d="m6 25 7-4 20 3-1 8-7 2z" fill="#ea6a16" stroke="#7a2c00" stroke-width="1.300"/></symbol>
<symbol id="u18" viewBox="0 0 36 36"><path d="M23 5c7-4 11 4 6 8-4 2-8 4-3 7 6 3 7 9 3 12-5 4-9-2-16 0C4 31 1 22 5 15c4-9 12-5 18-10z" fill="#f68416" stroke="#7a2c00" stroke-width="1.500"/><circle cx="26" cy="27" r="5" fill="#ffd638"/></symbol>
<symbol id="u19" viewBox="0 0 36 36"><path d="m10 14 22-1-6 10-23 1z" fill="#ffdca6" stroke="#7a2c00" stroke-width="1.500"/><path d="M18 18V6" stroke="#000" stroke-width="1.800"/><path d="m15 8 3-6 3 6z"/><path d="M18 24v6" stroke="#080" stroke-width="1.800"/><path d="m14.500 29 3.500 6 3.500-6z" fill="#0a9a1a"/></symbol>
<symbol id="u20" viewBox="0 0 36 36"><path d="m10 29 18 0-6 5z" fill="#0003"/><path d="m3 8 5-4h6v21l-5 4H3z" fill="#a5a5a5" stroke="#333" stroke-width="1.300"/><path d="m15 10 10 9 4-3 1 9-12-1 4-2-7-6z" fill="#e0351c" stroke="#811"/></symbol>

<symbol id="gopen" viewBox="0 0 36 36"><path d="m7 3 11-1 8 5v14H7z" fill="#eee" stroke="#777"/><path d="M4 34V15h11l3-4h14v23z" fill="url(#gGreen)" stroke="#2b6a12" stroke-width="1.500"/></symbol>
<symbol id="gsave" viewBox="0 0 36 36"><path d="M3 2h31v32H6l-3-4z" fill="#1b63d8" stroke="#0a2a70" stroke-width="1.600"/><path d="M8 3h21v14H8z" fill="#f2f2f2"/><path d="M10 7h17M10 11h17" stroke="#ccc"/><path d="M10 22h17v12H10z" fill="#7d96b8"/><path d="M13 24h6v8h-6z" fill="#0a3ea0"/></symbol>
<symbol id="gtgt" viewBox="0 0 36 36"><path d="M4 13V4h9M23 4h9v9M4 23v9h9M23 32h9v-9" fill="none" stroke="#151515" stroke-width="5"/><path d="m15 15 6 6m0-6-6 6" stroke="#151515" stroke-width="3"/></symbol>
<symbol id="geye" viewBox="0 0 36 36"><path d="M2 18C10 4 26 4 34 18 26 32 10 32 2 18z" fill="#eef6fc" stroke="#334" stroke-width="2"/><circle cx="18" cy="17.500" r="9" fill="#4cb0ec" stroke="#0a4a8a"/><circle cx="18" cy="17.500" r="4.500"/><circle cx="15" cy="14" r="2" fill="#fff"/></symbol>
<symbol id="gpen" viewBox="0 0 36 36"><path d="M2 11c7-2 0 10 2 15 2 7 5 7 9 5" fill="none" stroke="#4a1c10" stroke-width="2.600"/><path d="M34 1v16L21 32l-9 3 4-14z" fill="#e23a30"/><path d="m16 21 6 10-10 4z" fill="#f2c14a"/><path d="m13 31 3 3-4 1z"/></symbol>
<symbol id="gc1" viewBox="0 0 36 36"><path d="m8 10 7-8 9-1 6 8-3 9-8 5h-8z" fill="#d6d6d6" stroke="#888"/><ellipse cx="22" cy="9" rx="5" ry="6" fill="#b4b4b4"/><path d="M5 26v4q13 9 26 0v-4z" fill="#999"/><path d="M5 26q13-15 26 0-13 9-26 0z" fill="#222"/></symbol>
<symbol id="tube" viewBox="0 0 36 36"><path d="M3 19 15 3l14-1 6 10v5L22 33l-12 1-7-9z" stroke-width="1.600"/><ellipse cx="25" cy="11" rx="6" ry="8" transform="rotate(-35 25 11)" stroke-width="1.500"/></symbol>
<symbol id="tubew" viewBox="0 0 36 36"><g fill="#f4f4f4" stroke="#333" stroke-width="1.500"><path d="M3 19 15 3l14-1 6 10v5L22 33l-12 1-7-9z"/><g fill="none"><ellipse cx="25" cy="11" rx="7" ry="9" transform="rotate(-35 25 11)"/><ellipse cx="25" cy="11" rx="4" ry="6" transform="rotate(-35 25 11)"/><ellipse cx="12" cy="25" rx="7" ry="9" transform="rotate(-35 12 25)"/><ellipse cx="12" cy="25" rx="4" ry="5.500" transform="rotate(-35 12 25)"/></g></g></symbol>
<symbol id="tubet" viewBox="0 0 36 36"><path d="m3 3 10 8-2 14 6 10-12-6Q1 20 9 12z" fill="#0004"/><path d="m11 8 8-6 12 2 4 10-3 9-12 11-9-4 4-12z" fill="#12a09c" stroke="#033" stroke-width="1.400"/><ellipse cx="26" cy="11" rx="5" ry="8" transform="rotate(-35 26 11)" fill="#0b7775" stroke="#044"/></symbol>
<symbol id="tubeg" viewBox="0 0 36 36"><path d="M3 19 15 3l14-1 6 10v5L22 33l-12 1-7-9z" fill="#6fae2c" stroke="#232" stroke-width="1.500"/><path d="m3 19 4-7 18 18-3 3-12 1-7-9z" fill="#ececec" stroke="#888"/><path d="m2 6 28 28" stroke="#111" stroke-width="1.600"/><ellipse cx="25" cy="11" rx="5" ry="8" transform="rotate(-35 25 11)" fill="#4a8418" stroke="#232"/></symbol>
<symbol id="goct" viewBox="0 0 36 36"><path d="m11 6 10-1 9 6 2 11-7 9-12 1-8-8V14z" fill="#5aa9f2" stroke="#123a7a" stroke-width="2"/><path d="m12 9 9-1 7 6-11 4-9-2z" fill="#a8d6ff"/></symbol>
<symbol id="ghalf" viewBox="0 0 36 36"><ellipse cx="19" cy="32" rx="13" ry="4" fill="#0003"/><circle cx="18" cy="17" r="14.500" fill="#e3e3e3" stroke="#555"/><path d="M18 2.500a14.500 14.500 0 0 0 0 29z" fill="#ee8a1e" stroke="#7a3000"/></symbol>
</defs>
</svg>

<main class="desktop">
<section class="win rhino">
  <header class="title"><svg class="ric"><use href="#rhino"/></svg><span class="tt">city sim (55 KB) - Rhinoceros 7 Corporate - [Top]</span>
    <svg class="wbtn" viewBox="0 0 168 30"><path d="M9 15.500h15M149 8l15 15M164 8l-15 15" fill="none" stroke="currentColor" stroke-width="1.400"/><rect x="78.500" y="8" width="14" height="14" rx="2" fill="none" stroke="currentColor" stroke-width="1.600"/></svg></header>
  <nav class="menu"><span>文件(F)</span><span>编辑(E)</span><span>查看(V)</span><span>曲线(C)</span><span>曲面(S)</span><span>细分物件(U)</span><span>实体(O)</span><span>网格(M)</span><span>尺寸标注(D)</span><span>变动(T)</span><span>工具(L)</span><span>分析(A)</span><span>渲染(R)</span><span>面板(P)</span><span>说明(H)</span></nav>
  <div class="tabs"><span class="on">标准</span><span>工作平面</span><span>设置视图</span><span>显示</span><span>选取</span><span>工作视窗配置</span><span>可见性</span><span>变动</span><span>曲线工具</span><span>曲面工具</span><span>实体工具</span><span class="cl">细</span><span class="more">»</span><svg class="gear" viewBox="0 0 24 24"><circle cx="12" cy="12" r="9" fill="none" stroke="#8a8a8a" stroke-width="3.500" stroke-dasharray="3.500 2.150"/><circle cx="12" cy="12" r="7.500" fill="#c8c8c8" stroke="#8a8a8a"/><circle cx="12" cy="12" r="2.500" fill="#fff" stroke="#777"/></svg></div>
  <div class="tools">
    <i><svg><use href="#new"/></svg></i><i><svg><use href="#open"/></svg></i><i class="f"><svg><use href="#save"/></svg></i><i><svg><use href="#print"/></svg></i><i><svg><use href="#notes"/></svg></i><i><svg><use href="#cut"/></svg></i><i><svg><use href="#copy"/></svg></i><i><svg><use href="#paste"/></svg></i><i class="f"><svg><use href="#undo"/></svg></i><i><svg><use href="#hand"/></svg></i><i><svg><use href="#orbit"/></svg></i><i><svg><use href="#zoomd"/></svg></i><i><svg><use href="#zoomw"/></svg></i><i><svg><use href="#zoome"/></svg></i><i><svg><use href="#zooms"/></svg></i><i class="f"><svg><use href="#zoomu"/></svg></i><i class="f"><svg><use href="#grid4"/></svg></i><i class="f"><svg><use href="#car"/></svg></i><i class="f"><svg><use href="#cplane"/></svg></i><i class="f"><svg><use href="#cirr"/></svg></i><i class="f"><svg><use href="#sel"/></svg></i><i class="f"><svg><use href="#bulb"/></svg></i><i class="f"><svg><use href="#lock"/></svg></i><i class="f"><svg><use href="#layers"/></svg></i><i class="f"><b class="ring"></b></i><i><svg><use href="#sph"/></svg></i><i class="f"><svg><use href="#sphg"/></svg></i><i class="f"><svg><use href="#sphb"/></svg></i><i class="f last"><svg><use href="#spot"/></svg></i><span class="more">»</span>
  </div>
  <div class="work">
    <div class="side">
      <i><svg><use href="#arrow"/></svg></i><i class="f"><svg><use href="#pt"/></svg></i><i class="f"><svg><use href="#pline"/></svg></i><i class="f"><svg><use href="#crv"/></svg></i><i class="f"><svg><use href="#circ"/></svg></i><i class="f"><svg><use href="#ell"/></svg></i><i class="f"><svg><use href="#arc"/></svg></i><i class="f"><svg><use href="#rect"/></svg></i><i class="f"><svg><use href="#poly"/></svg></i><i class="f"><svg><use href="#fil"/></svg></i><i class="f"><svg><use href="#srf"/></svg></i><i class="f"><svg><use href="#srf2"/></svg></i><i class="f"><svg><use href="#box"/></svg></i><i class="f"><svg><use href="#bool"/></svg></i><i class="f"><svg><use href="#pipe"/></svg></i><i class="f"><svg><use href="#msh"/></svg></i><i><svg><use href="#puz"/></svg></i><i><svg><use href="#expl"/></svg></i><i><svg><use href="#trim"/></svg></i><i><svg><use href="#split"/></svg></i><i class="f"><svg><use href="#uni"/></svg></i><i><svg><use href="#dots"/></svg></i><i><svg><use href="#pts"/></svg></i><i class="f"><svg><use href="#pts2"/></svg></i><i><svg><use href="#txt"/></svg></i><i class="f"><svg><use href="#move"/></svg></i><span class="more">»</span>
    </div>
    <div class="viewcol">
      <div class="viewport"><svg id="scene" viewBox="55 200.500 1222 1123"></svg><div class="vlabel"><b>Top</b><s></s></div></div>
      <div class="vtabs"><svg viewBox="0 0 80 34"><path d="M3 1 30 32h41q4 0 4-4V0" fill="#edeef2" stroke="#b9c5e0" stroke-width="1.500"/></svg><span>Perspective</span><span>Top</span><span>Front</span><span>Right</span><svg class="plus" viewBox="0 0 14 14"><path d="M5 1h4v4h4v4H9v4H5V9H1V5h4z" fill="#fff" stroke="#888"/></svg></div>
    </div>
  </div>
  <div class="osnap"><label>端点</label><label>最近点</label><label>点</label><label>中点</label><label>中心点</label><label>交点</label><label>垂点</label><label>切点</label><label>四分点</label><label>节点</label><label>顶点</label><label class="dis">投影</label><label class="dis">停用</label></div>
  <div class="cmd"><p>指令: _Grasshopper</p><p>指令: _Undo</p><p class="prompt">指令:</p><div class="spin"><b></b><b class="dn"></b></div></div>
  <footer class="status"><span>工作平面</span><span>x 30.223</span><span>y 58.077</span><span>z</span><span>毫米</span><span class="lay">默认值</span><span>锁定格点</span><span>正交</span><span>平面模式</span><span>物件锁点</span><span class="act">智慧轨迹</span><span>操作轴</span><span>记录建构历史</span><span>过滤器</span><span></span></footer>
  <div class="shade"></div>
</section>

<section class="win gh">
  <header class="title"><span class="tt">Grasshopper - city sim V1.0</span>
    <svg class="wbtn" viewBox="0 0 168 30"><path d="M9 15.500h15M149 8l15 15M164 8l-15 15" fill="none" stroke="currentColor" stroke-width="1.600"/><rect x="78.500" y="8" width="14" height="14" rx="2" fill="none" stroke="currentColor" stroke-width="1.800"/></svg></header>
  <nav class="gmenu"><span>File</span><span>Edit</span><span>View</span><span>Display</span><span>Solution</span><span>Help</span><span>SnappingGecko</span><span class="doc">city sim V1.0</span></nav>
  <div class="gtabs"><span>Prm</span><span>Math</span><span>Set</span><span>Vec</span><span>Crv</span><span>Srf</span><span class="on">Msh</span><span>Int</span><span>Trns</span><span>Dis</span><span>D</span><span>E</span><span>W</span><span>P</span><span>R</span><span>D</span><span>K</span><span>P</span><span>B</span><span>H</span><span>L</span><span>K</span><span>L</span><span>L</span><span>W</span><span>E</span><span>i</span></div>
  <div class="ribbon">
    <div class="panel"><div class="grp"><div><svg><use href="#a1"/></svg><svg><use href="#a2"/></svg><svg><use href="#a5"/></svg><svg><use href="#a6"/></svg></div><div class="c1"><svg><use href="#a3"/></svg><svg><use href="#a7"/></svg></div><div class="c1"><svg><use href="#a4"/></svg><svg><use href="#a8"/></svg></div></div><h4>Analysis</h4></div>
    <div class="panel"><div class="grp"><div><svg><use href="#p1"/></svg><svg><use href="#a5"/></svg><svg><use href="#p3"/></svg><svg><use href="#p4"/></svg></div><div class="c1"><svg><use href="#p2"/></svg><svg><use href="#p5"/></svg></div></div><h4>Primitive</h4></div>
    <div class="panel"><div class="grp"><div><svg><use href="#t1"/></svg><svg><use href="#t2"/></svg><svg><use href="#t6"/></svg><svg><use href="#t7"/></svg></div><div class="c3"><svg><use href="#t3"/></svg><svg><use href="#t4"/></svg><svg><use href="#t5"/></svg><svg><use href="#t8"/></svg><svg><use href="#t9"/></svg></div><div class="c1"><svg><use href="#t10"/></svg><svg><use href="#t11"/></svg></div><div class="c1"><svg><use href="#t12"/></svg><svg><use href="#t13"/></svg></div><div class="c1"><svg><use href="#t14"/></svg><svg><use href="#t15"/></svg></div></div><h4>Triangulation</h4></div>
    <div class="panel"><div class="grp"><div class="c3"><svg><use href="#u1"/></svg><svg><use href="#u2"/></svg><svg><use href="#u3"/></svg><svg><use href="#u11"/></svg><svg><use href="#u12"/></svg><svg><use href="#u13"/></svg></div><div class="c5"><svg><use href="#u4"/></svg><b class="hue"></b><svg><use href="#u6"/></svg><svg><use href="#u7"/></svg><svg><use href="#u8"/></svg><svg><use href="#u14"/></svg><svg><use href="#u15"/></svg><svg><use href="#u16"/></svg><svg><use href="#u17"/></svg><svg><use href="#u18"/></svg></div><div class="c1"><svg><use href="#u9"/></svg><svg><use href="#u19"/></svg></div><div class="c1"><svg><use href="#u10"/></svg><svg><use href="#u20"/></svg></div></div><h4>Util</h4></div>
  </div>
  <div class="ctools">
    <svg><use href="#gopen"/></svg><svg><use href="#gsave"/></svg><hr><div class="combo">35%<svg viewBox="0 0 12 12"><path d="m1 3 5 5 5-5" fill="none" stroke="#555" stroke-width="1.300"/></svg></div><svg class="tg"><use href="#gtgt"/></svg><em></em><svg><use href="#geye"/></svg><em></em><svg><use href="#gpen"/></svg>
    <div class="rt"><svg><use href="#gc1"/></svg><svg><use href="#tubew"/></svg><svg class="tb r"><use href="#tube"/></svg><hr class="wide"><svg><use href="#tubet"/></svg><svg><use href="#tubeg"/></svg><svg><use href="#ghalf"/></svg><hr class="slim"><svg><use href="#goct"/></svg><em></em></div>
  </div>
  <div class="canvas"><svg id="graph" viewBox="1284 293 1273 1202"></svg>
    <div class="dock"><svg viewBox="0 0 36 36"><rect x="1" y="1" width="34" height="34" rx="3" fill="#b5b5b5" stroke="#333" stroke-width="2"/><path d="M18 9v10" stroke="#000" stroke-width="5"/><path d="m12 18 6 7 6-7z"/><path d="M5 28h26" stroke="#222" stroke-width="1.500"/><path d="M6 31h24" stroke="#222" stroke-width="3.500" stroke-dasharray="1.500 1.500"/></svg><svg viewBox="0 0 36 36"><rect x="1" y="1" width="34" height="34" rx="3" fill="#ffd21f" stroke="#444" stroke-width="2"/><path d="m5 25 3 4 6-10v9l8-13v10l6-15c3 8 3 12-1 19" fill="none" stroke="#a85a00" stroke-width="2.800"/></svg><svg viewBox="0 0 36 36"><path d="M10 3q0-3 8-2 5 0 5 4v9q0 3-3 3h-7q-3 0-3 3v4H5q-5 0-4-8 0-6 4-6h12V8h-7z" fill="#4f7fe0" stroke="#123"/><path d="M26 33q0 3-8 2-5 0-5-4v-8q0-3 3-3h7q4 0 4-4v-4h4q5 0 4 8 0 6-4 6H19v2h7z" fill="#f59a18" stroke="#622"/><circle cx="14" cy="5" r="1.500"/><circle cx="22" cy="32" r="1.500"/></svg><svg viewBox="0 0 36 36"><text x="2" y="25" transform="rotate(-25 14 22)" class="abc">ABC</text><path d="m6 33 3-5 22-10" fill="none" stroke="#222" stroke-width="1.500"/></svg><svg viewBox="0 0 36 36"><path d="M8 28 28 7" stroke="#111" stroke-width="2.600"/><circle cx="8" cy="28" r="3" fill="#fff" stroke="#111" stroke-width="1.500"/><circle cx="28" cy="7" r="3" fill="#fff" stroke="#111" stroke-width="1.500"/></svg><span></span></div>
    <svg class="compass" viewBox="0 0 70 66"><defs><radialGradient id="cg"><stop offset="0" stop-color="#eee"/><stop offset="1" stop-color="#aaa"/></radialGradient></defs><circle cx="38" cy="35" r="29.500" fill="#fff" stroke="#333"/><circle cx="38" cy="35" r="27" fill="url(#cg)"/><path d="m16 14 7 8-9-1zM60 13l-7 9-1-9zM17 58l8-9-9 2zM60 56l-7-6 8-2z" fill="#fff"/><path d="M14 16Q24 4 33 4" fill="none" stroke="#000" stroke-width="4" stroke-linecap="round"/><path d="m1 5 10 1 3 9-10 1z"/></svg>
  </div>
  <footer class="gstatus"><svg viewBox="0 0 26 26"><circle cx="13" cy="13" r="12" fill="#1d6ab4" stroke="#0a2a6a"/><path d="M3 9q4-7 7-6v19q-8-3-7-13z" fill="#5ac8c0"/><rect x="10.500" y="3" width="5" height="12" rx="2" fill="#1a46a0" stroke="#fff" stroke-width="1.300"/><circle cx="13" cy="20" r="2.300" fill="#1a46a0" stroke="#fff" stroke-width="1.200"/></svg><span>Save successfully completed... (5 seconds ago)</span><span class="ver">1.0.0007</span><svg class="grip" viewBox="0 0 12 12"><path d="M1 10h2M5 10h2M9 10h2M5 6h2M9 6h2M9 2h2" stroke="#999" stroke-width="2"/></svg></footer>
</section>
</main>

<footer class="taskbar">
  <div class="weather"><svg viewBox="0 0 36 36"><path d="M23 1c10 3 14 13 9 23-6 12-22 12-27 4 12 2 20-10 18-27z" fill="url(#gMoon)"/><path d="M8 8h6M18 8h17M7 14h28M1 20h28M1 26h16M20 20h14" stroke="#fbdc7a" stroke-width="2.600" stroke-linecap="round"/></svg><div>13°C<br>雾霾</div></div>
  <div class="apps">
    <i><svg viewBox="0 0 36 36"><path d="M1 1h16v16H1zM19 1h16v16H19zM1 19h16v16H1zM19 19h16v16H19z" fill="url(#gWin)"/></svg></i>
    <i><svg viewBox="0 0 36 36"><path d="m24 24 8 9" stroke="#222" stroke-width="4"/><circle cx="16" cy="15" r="12.500" fill="#5f6270" stroke="#333" stroke-width="3"/></svg></i>
    <i><svg viewBox="0 0 36 36"><path d="M23 1c2 5 11 7 12 18 0 22-34 22-34 0 0-5 2-10 5-12l1 5 4-6q5 2 8 5z" fill="#ff9a1f"/><path d="M23 1c2 5 11 7 12 18-1 8-5 12-9 14 3-10 2-18-7-21z" fill="#ffe03c"/><circle cx="17" cy="20" r="8" fill="#7a3ff0"/><path d="M1 19c4 12 16 12 24 6 0 12-22 13-24-6z" fill="#ff3d5a"/><path d="m5 11 9 2 3 3-5 3q-6 0-7-8z" fill="#ff8a1a"/></svg></i>
    <i><svg viewBox="0 0 36 36"><circle cx="18" cy="18" r="17.500" fill="#2da94f"/><path d="M3 9a17.500 17.500 0 0 1 30.500 0H18l-8 13z" fill="#e8432e"/><path d="M33.500 9A17.500 17.500 0 0 1 17 35.500L26 22V9z" fill="#fdc929"/><circle cx="18" cy="18" r="8.500" fill="#fff"/><circle cx="18" cy="18" r="6.800" fill="#3b7ff0"/></svg></i>
    <i class="run"><svg viewBox="0 0 36 36"><circle cx="18" cy="18" r="17.500" fill="#0c62b8"/><path d="M.5 17C2 7 9 .5 18 .5c10 0 17.500 8 17.500 15.500 0 7-6 9-10 9-5 0-7-2-5-5 3-6-4-12-10-10C5 11 2 14 .5 17z" fill="url(#gEdge)"/><path d="M.5 17C3 11 8 9 13 10c-6 4-7 12-3 18 2 3 5 6 8 7.500C8 36 0 28 .5 17z" fill="#1488de"/><path d="M20.500 16c3 4-3 6 1 9 3 2 8 1 11-1-3 4-6 6-10 6-7 0-10-8-2-14z" fill="#181f33"/></svg></i>
    <i><svg viewBox="0 0 36 36"><path d="M12 2h23v32H12z" fill="#2b7cd3"/><path d="M12 2h23v8H12z" fill="#41a5ee"/><path d="M12 26h23v8H12z" fill="#103f91"/><rect y="9" width="18" height="18" rx="2" fill="#185abd"/><text x="9" y="23" class="ltr">W</text></svg></i>
    <i><svg viewBox="0 0 36 36"><path d="M9 2h26v32H9z" fill="#107c41"/><path d="M22 2h13v10H22z" fill="#33c481"/><path d="M9 2h13v10H9z" fill="#21a366"/><path d="M9 24h26v10H9z" fill="#185c37"/><rect y="9" width="18" height="18" rx="2" fill="#0f6b39"/><text x="9" y="23" class="ltr">X</text></svg></i>
    <i><svg viewBox="0 0 36 36"><circle cx="19" cy="18" r="16.500" fill="#ed6c47"/><path d="M19 1.500A16.500 16.500 0 0 1 35.500 18H19z" fill="#ff8f6b"/><path d="M35.500 18a16.500 16.500 0 0 1-33 0z" fill="#d35230"/><rect y="9" width="18" height="18" rx="2" fill="#c43e1c"/><text x="9" y="23" class="ltr">P</text></svg></i>
    <i><svg viewBox="0 0 36 36"><path d="m7 12 14-10 14 9v18H7z" fill="#1e9be6"/><path d="m12 22 23-13v9L20 30z" fill="#0f4a9e"/><rect y="9" width="18" height="18" rx="2" fill="#0f6cbd"/><text x="9" y="23" class="ltr">O</text><rect x="11" y="25" width="25" height="11" rx="2" fill="#35e0e0"/><text x="23.500" y="34" class="new">NEW</text></svg></i>
    <i><svg viewBox="0 0 36 36"><path d="M4 4h28v28H4z" fill="#5cc8e8"/><path d="M8 1v5M14 1v5M21 1v5M28 1v5" stroke="#1583a8" stroke-width="3"/><path d="M9 13h18M9 19h18M9 25h18" stroke="#0f6f94" stroke-width="2"/><path d="M4 30h28v3H4z" fill="#eee"/><path d="M4 33h28v3H4z" fill="#b05a14"/></svg></i>
    <i><svg viewBox="0 0 36 36"><path d="m4 6 21-3 7 5v24l-22 2-6-6z" fill="#fff" stroke="#000" stroke-width="1.500"/><path d="m4 6 6 4 22-2M10 10v23" fill="none" stroke="#000" stroke-width="1.800"/><text x="21" y="28" class="nt">N</text></svg></i>
    <i><svg viewBox="0 0 36 36"><path d="m26 0 10 4v28l-10 4L2 14l3-3 21 16V9L5 25l-3-3z" fill="#2398e6"/><path d="m2 22 3 3L26 9V0z" fill="#0d6cb8"/></svg></i>
    <i><svg viewBox="0 0 36 36"><path d="M8 0h10v4H8zM32 9h3v9h-3z" fill="#b46aa8"/><path d="M1 16h3v9H1z" fill="#e0703c"/><rect x="3" y="3" width="30" height="30" rx="2" fill="#f6f6f6"/><text x="18" y="26" class="zt">Z</text></svg></i>
    <i><svg viewBox="0 0 36 36"><path d="m1 18 5-5 9 9-4 9z" fill="#1a56b8"/><path d="M31 4 36 9 14 32l-6-6z" fill="#3f9ff0"/></svg></i>
    <i class="run"><svg viewBox="0 0 36 36"><path d="M30 14V5H2v21h12" fill="none" stroke="#16c060" stroke-width="2.600"/><path d="M2 3h29v5H2z" fill="#3ce87e"/><circle cx="26" cy="25" r="9" fill="#ccc"/><circle cx="23" cy="23" r="1.200"/><circle cx="29" cy="23" r="1.200"/></svg></i>
    <i class="cur"><svg viewBox="0 0 36 36"><use href="#rhino"/><text x="30" y="14" class="sev">7</text></svg></i>
  </div>
  <div class="tray">
    <svg viewBox="0 0 26 26"><path d="m5 17 8-8 8 8" fill="none" stroke="#0a0c12" stroke-width="2"/></svg>
    <svg viewBox="0 0 26 26"><rect x="2" y="2" width="22" height="22" rx="5" fill="#168cff"/><path d="m8 5 9 5q3 4-1 9l-3 3 0-5q-5-5-5-12z" fill="#fff"/></svg>
    <svg viewBox="0 0 26 26"><circle cx="10" cy="10" r="9" fill="#35c95e"/><circle cx="18" cy="16" r="7.500" fill="#ddd"/><g fill="#333"><circle cx="7" cy="7" r="1"/><circle cx="13" cy="7" r="1"/><circle cx="16" cy="14" r="1"/><circle cx="21" cy="14" r="1"/></g></svg>
    <svg viewBox="0 0 26 26"><path d="M4 1h18v20h-4l-2 4-3-4H4z" fill="#12a0ff"/><path d="M13 5v12M7 9l12 5M19 9 7 14" stroke="#fff" stroke-width="2.600"/></svg>
    <svg viewBox="0 0 26 26"><path d="M4 2h8v9H4zM14 2h8v9h-8zM4 13h8v5l-8 7zM14 13h8v12l-8-7z" fill="#020306"/></svg>
    <span class="ime">中</span><span class="ime">拼</span>
    <svg viewBox="0 0 26 26"><g fill="none" stroke="#0a0c12" stroke-width="2"><path d="M2 11q11-10 22 0M6 15q7-7 14 0M9 19q4-4 8 0"/></g><circle cx="13" cy="21" r="2" fill="#000"/></svg>
    <svg viewBox="0 0 26 26"><path d="M3 10h4l5-5v17l-5-5H3z" fill="none" stroke="#0a0c12" stroke-width="2"/><path d="M15 9q3 4 0 9" fill="none" stroke="#0a0c12" stroke-width="1.600"/><path d="M19 6q6 7 0 14" fill="none" stroke="#0a0c1266" stroke-width="1.600"/></svg>
    <svg viewBox="0 0 26 26"><rect x="2" y="7" width="20" height="13" rx="3" fill="none" stroke="#04060a" stroke-width="2"/><path d="M8 9h12v9H5zM23 11h2v5h-2zM5 1 2 9h5L5 14l6-8H7z" fill="#020306"/></svg>
    <div class="clock">23:14<br>2024/3/23</div>
    <svg viewBox="0 0 26 26"><path d="M14 3C7 2 6 8 6 12l-3 8h20l-2-5M10 22q3 3 6 0" fill="none" stroke="#0a0c12" stroke-width="1.800"/><path d="M10 9h5l-5 6h5M18 2h5l-5 6h5" fill="none" stroke="#0a0c12" stroke-width="1.500"/></svg>
  </div>
</footer>
<script src="scene.js"></script>
</body>
</html>
```
FILE: styles.css
```css
* { box-sizing: border-box; }
body { margin: 0; width: 2560px; height: 1600px; overflow: hidden; background: #1c2338; font-family: "Open Sans", "Noto Sans CJK SC", sans-serif; display: flex; flex-direction: column; }
p, h4 { margin: 0; }
i { font-style: normal; }
svg { display: block; flex: none; }
.sprite { position: absolute; width: 0; height: 0; }
.ticon { font: bold 13px "DejaVu Sans", sans-serif; }
.tsm { font: bold 10px "DejaVu Sans", sans-serif; }
.desktop { display: flex; height: 1528px; }
.win { position: relative; width: 1280px; height: 1528px; border: 2px solid #777; display: flex; flex-direction: column; overflow: hidden; }

.title { height: 43px; flex: none; display: flex; align-items: center; background: #f3f3f3; color: #999; font-size: 17.500px; letter-spacing: -.42px; white-space: nowrap; padding-bottom: 2px; }
.rhino .title { letter-spacing: -.16px; }
.tt { line-height: 41px; }
.wbtn { width: 168px; height: 30px; margin-left: auto; margin-right: 23px; color: #999; }
.ric { width: 24px; height: 24px; margin: 0 7px 0 11px; }
.menu { height: 57px; flex: none; background: #fff; padding-left: 11px; display: grid; grid-template-columns: 80px 80px 82.500px 81.500px 80px 118.500px 85.500px 87.500px 120.400px 80px 79px 83px 82px 80px; grid-auto-rows: 29px; color: #666; font-size: 18px; line-height: 28px; white-space: nowrap; }
.tabs { height: 42px; flex: none; background: #eaebef; padding: 6px 0 0 10px; display: grid; grid-template-columns: 83.500px 121px 120.500px 83px 83px 159px 102px 83px 122px 120px 108px 38px 22px 22px; font-size: 19px; line-height: 36px; color: #222; white-space: nowrap; }
.tabs > span { padding-left: 21px; border-bottom: 1.500px solid #b9c1dd; }
.tabs .on { border: 1.500px solid #c3cbe4; border-bottom: 0; border-left: 1px solid #d5d9e8; border-radius: 8px 6px 0 0; }
.tabs .cl { overflow: hidden; padding-left: 33px; }
.tabs .more { border-left: 1px solid #b9c1dd; border-top: 1px solid #b9c1dd; padding: 0 0 0 3px; }
.more { font: 22px/30px "Open Sans"; color: #222; }
.gear { width: 22px; height: 22px; margin-top: 6px; }
.tools { height: 56px; flex: none; background: #eaebef; display: flex; padding-left: 10px; }
.tools i, .side i { width: 42px; height: 42px; margin-top: 1px; display: grid; place-items: center; position: relative; flex: none; }
.tools i.last { margin-left: 5px; }
.tools svg, .side svg { width: 36px; height: 36px; }
.f::after { content: ""; position: absolute; right: 2px; bottom: 1px; width: 9px; height: 9px; background: #6d6f73; clip-path: polygon(100% 0, 100% 100%, 0 100%); }
.ring { width: 29px; height: 29px; border-radius: 50%; border: 1px solid #555; background: radial-gradient(circle, #eaebef 0 8px, #555 8px 9px, transparent 9px), conic-gradient(red, #f0f, blue, cyan, lime, yellow, red); }
.tools .more { margin: 5px 0 0 22px; }
.work { flex: none; height: 1164px; display: flex; }
.side { width: 53px; background: #eaebef; padding: 9px 0 0 1px; border-top: 1px solid #c5cee2; overflow: hidden; }
.side i { margin-top: 0; }
.side .more { display: block; margin: 3px 0 0 25px; }
.viewcol { width: 1223px; display: flex; flex-direction: column; }
.viewport { position: relative; height: 1125px; border: solid #b5bedb; border-width: 1px 1px 1px 0; background: #9da3aa; }
#scene { width: 1222px; height: 1123px; }
.vlabel { position: absolute; left: 0; top: 0; width: 73px; height: 28px; background: #839af0; border-radius: 0 0 5px 0; display: flex; align-items: center; color: #223; font-size: 19px; padding-left: 10px; gap: 10px; }
.vlabel b { border-right: 1px solid #223; line-height: 24px; padding-right: 10px; font-family: "Noto Sans"; }
.vlabel s { border: 5.500px solid transparent; border-top: 6px solid #223; border-bottom: 0; margin-left: -7px; }
.vtabs { position: relative; height: 39px; background: #eaebef; display: grid; grid-template-columns: 128px 60px 72px 73px 20px; padding-left: 17px; font-size: 18.500px; line-height: 30px; color: #222; align-items: start; }
.vtabs span { position: relative; }
.vtabs svg:first-child { position: absolute; left: 112px; top: 0; width: 80px; height: 34px; }
.vtabs .plus { width: 14px; height: 14px; margin-top: 9px; }
.osnap { height: 34px; flex: none; background: #eaebef; padding-left: 14px; border-bottom: 1px solid #cbd1e4; display: flex; font-size: 19px; line-height: 33px; color: #222; white-space: nowrap; letter-spacing: -.35px; }
.osnap label { display: flex; align-items: center; margin-right: 10px; }
.osnap label::before { content: ""; width: 20px; height: 20px; border: 1.500px solid #777; border-radius: 4px; background: #f5f5f5; margin-right: 5px; }
.osnap .dis::before { width: 18px; height: 18px; border-color: #ccc; background: #fff; margin-right: 6px; }
.osnap .dis { margin-right: 31px; }
.cmd { position: relative; height: 102px; flex: none; border: solid #eaebef; border-width: 3px 0 4px 10px; background: #fff; font-size: 18px; line-height: 32px; color: #111; padding-top: 4px; border-bottom-color: #eaebef; }
.cmd p { padding-left: 1px; height: 32px; }
.cmd .prompt { border-top: 1px solid #c0c3d8; font-weight: bold; line-height: 27px; height: 27px; color: #000; }
.spin { position: absolute; right: 0; top: 0; width: 24px; height: 95px; background: #ececec; padding-top: 68px; display: flex; flex-direction: column; }
.spin b { width: 23px; height: 13px; border: 1px solid #999; display: grid; place-items: center; }
.spin b::after { content: ""; border: 5px solid transparent; border-bottom: 6px solid #000; border-top: 0; }
.spin .dn::after { transform: rotate(180deg); }
.status { height: 26px; flex: none; background: #eaebef; border-top: 1px solid #b5bcd5; display: grid; grid-template-columns: 72px 105px 105px 105px 105px 202px 73px 45px 73px 73px 73px 59px 103px 59px 24px; font-size: 18.500px; line-height: 26px; color: #222; white-space: nowrap; }
.status span { border-right: 1px solid #b5bcd5; overflow: hidden; padding-left: 1px; }
.status span:nth-child(n+2):nth-child(-n+5) { text-align: center; }
.status span:nth-child(8) { padding-left: 3px; }
.status .lay { padding-left: 4px; display: flex; align-items: center; gap: 4px; }
.lay::before { content: ""; width: 17px; height: 17px; background: #000; }
.status .act { font-weight: bold; background: #bcc8e6; }
.shade { position: absolute; right: 0; top: 0; width: 64px; height: 1524px; background: linear-gradient(90deg, #0000 0, #00000008 30%, #00000035 100%); }

.gh .title { background: linear-gradient(90deg, #f0f2f9, #eef3fb); color: #111; padding-left: 12px; letter-spacing: -.15px; }
.gh .wbtn { color: #000; margin-right: 23px; }
.gmenu { height: 40px; flex: none; background: linear-gradient(90deg, #f1f1f1, #fdfdfd); padding-left: 17px; display: grid; grid-template-columns: 51.800px 55.900px 63.300px 85.200px 93.600px 62.400px 726px 120px; font-size: 18.500px; line-height: 39px; color: #000; letter-spacing: 0; white-space: nowrap; }
.gtabs { height: 33px; flex: none; background: #f0f0f0; display: grid; grid-template-columns: 52px 61px 52px 52px 52px 52px 52px 53px 61px 52px repeat(17, 42px); font: 15px/34px "Liberation Mono"; color: #777; text-align: center; border-bottom: 1px solid #9a9a9a; }
.gtabs .on { background: #fcfcfc; border: 1.500px solid #999; border-bottom: 0; border-radius: 10px 10px 0 0; color: #000; line-height: 29px; height: 33px; }
.ribbon { height: 129px; flex: none; background: linear-gradient(#dcdcdc, #f0f0f0 90%); border-radius: 0 10px 0 0; display: flex; gap: 6px; padding: 4px 0 0 4px; border-bottom: 0; }
.panel { height: 109px; border: 1px solid #888; border-radius: 6px; background: linear-gradient(#e0e0e0, #d0d0d0 2%, #ececec 75%); display: flex; flex-direction: column; overflow: hidden; box-shadow: inset 0 1px #fff; flex: none; }
.grp { height: 86px; display: flex; gap: 15px; padding: 0 2px; }
.grp > div { display: grid; grid-template-columns: repeat(2, 42px); grid-auto-rows: 42px; place-items: center; position: relative; }
.grp > div + div::before { content: ""; position: absolute; left: -8px; top: 3px; width: 1px; height: 80px; background: #c6c6c6; box-shadow: 1px 0 #fff; }
.grp .c1 { grid-template-columns: 42px; }
.grp .c3 { grid-template-columns: repeat(3, 42px); }
.grp .c5 { grid-template-columns: repeat(5, 42px); }
.grp svg { width: 36px; height: 36px; filter: drop-shadow(1px 2px 1px #0004); }
.hue { width: 27px; height: 27px; border-radius: 50%; background: radial-gradient(circle, #fff, #fff0 70%), conic-gradient(#e2f, #f33, #e90, #7d2, #1c6, #29f, #e2f); box-shadow: 0 0 2px #555; }
.panel h4 { height: 22px; background: linear-gradient(#1a1a1a, #2a2a2a 30%, #161616); color: #fff; text-align: center; font: 15px/18px "Liberation Mono"; position: relative; padding-right: 16px; }
.panel h4::after { content: ""; position: absolute; right: 4px; bottom: 5px; width: 9px; height: 11px; background: #aaa; clip-path: polygon(36% 0, 64% 0, 64% 45%, 100% 45%, 50% 100%, 0 45%, 36% 45%); }
.ctools { height: 46px; flex: none; border-top: 2px solid #777; background: linear-gradient(#fff, #f2f2f2); display: flex; align-items: center; padding-left: 3px; position: relative; }
.ctools > svg, .rt > svg { width: 36px; height: 36px; margin-right: 6px; }
.ctools hr { width: 1px; height: 32px; border: 0; background: #bbb; margin: 0 4px 0 2px; }
.combo { width: 202px; height: 32px; border: 1px solid #888; background: #fff; font-size: 19px; line-height: 30px; padding: 0 8px 0 4px; display: flex; justify-content: space-between; align-items: center; letter-spacing: -.8px; }
.combo svg { width: 12px; height: 12px; }
.ctools svg.tg { margin-left: 5px; }
.ctools em { border: 4px solid transparent; border-top: 5px solid #000; border-bottom: 0; margin: 2px 5px 0 3px; }
.rt { display: flex; align-items: center; margin-left: auto; margin-right: 5px; }
.ctools .rt svg { margin-right: 4px; }
.ctools .rt em { margin: 2px 0 0 1px; }
.ctools .rt .wide { margin: 0 9px 0 7px; }
.ctools .rt .slim { margin: 0 4px 0 0; }
.tb.r { fill: #c01010; stroke: #500; outline: 1px solid #2a86d8; outline-offset: 2px; }
.canvas { position: relative; height: 1204px; flex: none; background: #cdc8c0; border: solid #999; border-width: 0 2px 2px 1px; border-right-color: #e8e8e8; border-bottom-color: #fff; margin: 0 1px 0 1px; }
#graph { width: 1273px; height: 1202px; }
.dock { position: absolute; left: 0; bottom: 0; width: 220px; height: 42px; border: 1px solid #000; background: linear-gradient(#eee, #ccc 40%, #aaa 45%, #b4b4b4); display: flex; align-items: center; gap: 6px; padding-left: 2px; }
.dock svg { width: 36px; height: 36px; }
.dock span { width: 8px; height: 40px; background: linear-gradient(#aaa 40%, #888 40%); margin-left: 2px; }
.abc { font: italic bold 15px "DejaVu Sans"; fill: #222; }
.compass { position: absolute; right: 12px; bottom: 13px; width: 70px; height: 66px; }
.gstatus { height: 29px; flex: none; background: #f0f0f0; border-top: 1px solid #ccc; display: flex; align-items: center; padding-left: 3px; padding-bottom: 1px; font-size: 18.500px; letter-spacing: .02px; color: #000; white-space: nowrap; }
.gstatus svg { width: 26px; height: 26px; margin-right: 4px; }
.ver { margin-left: auto; margin-right: 34px; color: #777; }
.gstatus .grip { width: 12px; height: 12px; margin: 10px 2px 0 0; }

.taskbar { height: 72px; background: linear-gradient(90deg, #1c2338, #1b1f3c 18%, #181f33 45%, #181f33 75%, #1c243a); display: flex; align-items: center; }
.weather { width: 752px; padding-left: 29px; display: flex; align-items: center; gap: 12px; color: #0a0d16; font-size: 17px; line-height: 24px; }
.weather svg { width: 36px; height: 36px; }
.apps { display: flex; width: 1173px; }
.apps i { width: 66.150px; height: 56px; display: grid; place-items: center; position: relative; }
.apps svg { width: 36px; height: 36px; }
.apps .run::after { content: ""; position: absolute; bottom: 2px; left: 29px; width: 9px; height: 5px; border-radius: 3px; background: #0b0f1a; }
.apps .cur { width: 56px; margin-left: 5px; background: #8d8f9b; border-radius: 6px; }
.cur::after { content: ""; position: absolute; bottom: 0; left: 16px; width: 24px; height: 4px; border-radius: 2px; background: #6a7890; }
.ltr { font: bold 13px "Open Sans"; fill: #fff; text-anchor: middle; }
.new { font: bold 9px "Open Sans"; text-anchor: middle; }
.nt { font: bold 19px "Liberation Serif"; text-anchor: middle; }
.zt { font: bold 24px "Open Sans"; fill: #e8404a; text-anchor: middle; }
.sev { font: 15px "Open Sans"; fill: #fff; text-anchor: middle; }
.tray { display: grid; grid-template-columns: 48px 48px 48px 48px 48px 46px 69.500px 45px 26px 47px 96.500px 48px; align-items: center; justify-items: center; color: #0a0c12; }
.tray svg { width: 26px; height: 26px; }
.ime { font-size: 22px; }
.clock { justify-self: end; text-align: right; font-size: 17px; line-height: 24px; letter-spacing: -.2px; }
```
FILE: scene.js
```js
// Rhino top viewport: grid, buildings, hubs and connecting pipes.
(function () {
  const GX = 134.3, GY = 263.4, SIZE = 1000;
  let s = `<defs>
    <radialGradient id="hub"><stop offset="0" stop-color="#ff1493"/><stop offset=".5" stop-color="#ff1493"/><stop offset=".78" stop-color="#e03a98" stop-opacity=".55"/><stop offset="1" stop-color="#b07a9c" stop-opacity="0"/></radialGradient>
    <radialGradient id="hubIn"><stop offset="0" stop-color="#ff1493"/><stop offset=".66" stop-color="#fa1494"/><stop offset=".86" stop-color="#c4519c" stop-opacity=".9"/><stop offset=".96" stop-color="#8c90b0" stop-opacity=".8"/><stop offset="1" stop-color="#8c90b0" stop-opacity="0"/></radialGradient></defs>`;
  let minor = '', major = '';
  for (let k = 0; k <= 140; k++) {
    const p = k * SIZE / 140, x = Math.round(GX + p) + .5, y = Math.round(GY + p);
    const d = `M${x} ${GY}v${SIZE}M${GX} ${y}h${SIZE}`;
    if (k % 5) minor += d; else major += d;
  }
  s += `<path d="${minor}" stroke="#939aa1" fill="none"/><path d="${major}" stroke="#82868e" fill="none"/>`;
  s += `<path d="M634.300 263v501" stroke="#3f9140" stroke-width="1.500"/><path d="M634 764h500" stroke="#8f3c40" stroke-width="1.500"/>`;
  s += `<path d="M109.500 1225v46h45" fill="none" stroke="#666"/><text x="112" y="1225" font-size="19" fill="#555">y</text><text x="158" y="1272" font-size="19" fill="#555">x</text>`;
  s += `<rect x="314.500" y="536" width="671" height="426.500" fill="#ff6464" fill-opacity=".4" stroke="#960000" stroke-width="1.200"/>`;

  const boxes = [
    [346.5,498.3,410.6,544.3],[360.4,587.5,398.8,643.4],[477.5,628.4,532.7,667.5],[467.3,755.5,527.8,794.5],
    [571.4,548.5,636.7,591.3],[328.6,763.5,385.7,807.5],[339.6,901.3,395.5,942.2],[419.6,834.3,484.5,871.4],
    [527.3,889.4,572.7,946.4],[570.2,775.4,636.7,816.3],[662.4,527.4,721.6,581.4],[630.2,682.4,679.6,719.5],
    [827.3,500.3,883.7,538.1],[935.5,526.3,985.7,575.3],[760.4,582.5,812.2,638.4],[895.5,633.4,948.6,671.7],
    [985.7,623.5,1033.5,669.4],[760.4,693.5,815.5,750.5],[892.2,734.4,944.5,783.4],[662.4,826.3,698.8,872.2],
    [633.5,901.3,684.5,954.5],[735.5,892.5,799.6,945.3],[822.4,860.3,885.7,899.4],[967.3,798.3,1006.5,838.5],
    [954.3,910.5,1025.7,952.6]];
  const hubs = [
    [424.5,427.9,0,[1]],[447,672.8,1,[2,3,4]],[618.8,648.7,1,[5,12]],[319.6,832,1,[6,7]],[505.3,924.6,1,[8,9]],
    [723.3,475.4,0,[11]],[993,469.3,0,[14]],[835,652.2,1,[13,15,16,18,19]],[1129.4,750.5,0,[17]],
    [695.1,817.1,1,[10,20,21]],[849.8,940.7,1,[22,23]],[1022,958.3,0,[24,25]]];
  const cross = (x, y) => `<path d="M${x - 5.2} ${y - 5.2}l10.400 10.400M${x + 5.2} ${y - 5.2}l-10.400 10.400" stroke="#960000" stroke-width="4.800"/>`;
  const mid = b => [(b[0] + b[2]) / 2, (b[1] + b[3]) / 2];

  for (const [x, y, inner] of hubs) s += `<circle cx="${x}" cy="${y + .5}" r="26.500" fill="url(#${inner ? 'hubIn' : 'hub'})"/>`;
  s += `<rect x="146.500" y="427.300" width="1059" height="696" fill="none" stroke="#960000" stroke-width="1.200"/>`;
  for (const [x, y, , ids] of hubs) for (const i of ids) {
    const [mx, my] = mid(boxes[i - 1]), d = `M${mx} ${my}L${x} ${y}`;
    s += `<path d="${d}" stroke="#8a1a1e" stroke-width="7.500" stroke-opacity=".85"/><path d="${d}" stroke="#bd3a3c" stroke-width="4.500"/><path d="${d}" stroke="#a05055" stroke-width="1"/>`;
  }
  for (const b of boxes) s += cross(...mid(b)) + cross(b[0], b[3]);
  for (const h of hubs) s += cross(h[0], h[1]);
  for (const b of boxes) s += `<rect x="${b[0]}" y="${b[1]}" width="${b[2] - b[0]}" height="${b[3] - b[1]}" fill="#ff7070" fill-opacity=".72" stroke="#960000" stroke-width="1.200"/>`;
  for (const p of [[201.6,502.2],[175.5,667.9],[149,967.1],[317.1,1115.6],[712.8,1089.9],[888.7,1117.9],[1159.6,1065.8],[1195.9,446.3]]) s += cross(...p);
  document.getElementById('scene').innerHTML = s;
})();

// Grasshopper definition graph.
(function () {
  let s = `<defs><linearGradient id="nd" x1="0" y1="0" x2="0" y2="1"><stop offset="0" stop-color="#d4d4d4"/><stop offset="1" stop-color="#c6c6c6"/></linearGradient></defs>`;
  s += `<rect x="1425.500" y="552.500" width="1140" height="950" fill="#d4cfc7" stroke="#000" stroke-width="1.200"/>`;
  const GRP = 'fill="#b9a4d8" stroke="#9d90ae"';
  for (const [a, b, c, d] of [[1558.7,636,1714.3,672.3],[2110.2,614,2151,643.3],[1994.4,682.3,2052.6,704.3],[2252.5,840.7,2321.8,869.3],[1923.2,874,2130.4,913.7]])
    s += `<rect x="${a}" y="${b}" width="${c - a}" height="${d - b}" ${GRP}/>`;
  s += `<circle cx="1584.700" cy="597" r="13.200" ${GRP}/><circle cx="1939" cy="885" r="13.200" fill="#ac8edb" stroke="#9080ae"/>`;
  s += `<path d="M1792 689.700V683q0-7 7-7h55q7 0 7 7v98q0 6-7 6h-129q-7 0-7-7v-14q0-7 7-7h64q4-1 4-4t-4-4h-64q-7 0-7-7v-14q0-7 7-7h64q3-1 3-3t-3-3h-64q-7 0-7-7v-14q0-7 7-7z" ${GRP}/>`;
  const wires = [
    [1488.3,513.3,1498.5,513.3],[1594,597,1637.8,597],[1594,597,1660.7,643.7,33],[1635,651,1660.7,651],[1635,658,1660.7,658],
    [1711.2,651,1754.6,651],[1711.2,654,1736.7,618.3,18],[1754.6,618,1850.5,618],[1780.6,651,1802.6,697,38],[1780.6,651,1802.6,730,61],
    [1780.6,651,1802.6,765.7,89],[1783.7,703.5,1802.6,703.5],[1783.7,737.5,1802.6,737.5],[1783.7,773,1802.6,773],
    [1850.5,697,1850.5,625,51],[1850.5,730,1850.5,632.5,71],[1850.5,765.7,1898.5,696.7,38],[1898.5,621.5,1954.6,621.5],[1998,621.5,2034.7,621.5],
    [1898.5,622,1998,690,50],[1898.5,622,1980.6,814.3,150],[1898.5,622,1954.6,844,150],[1947.4,696.7,1998,696.7],[1947.4,696.7,2034.7,629,48],
    [2088.8,621.5,2113.3,621.5],[2088.8,621.5,2113.3,635.3,14],[2049.5,693.3,2113.3,629.3,40],[1998,814.3,2023.2,814.3],
    [2080.7,811,2092.9,791.3,12],[2080.7,818.3,2092.9,828.7,9],[2080.7,818.3,2109.3,850,20],[2126.4,829,2156.8,791.3,22],
    [2126.8,850,2156.8,850],[2126.8,850,2211.8,904,42],[2209.3,848,2256.4,848],[2209.3,848,2211.8,911,43],[2209.3,862,2273.6,793.3,42],
    [2273.6,848,2291,848],[2273.6,862.3,2291,862.3],[2126.4,895.3,2156.8,861,22],[1947.5,885,2045,885],[2020,892,2045,892],[2020,899,2045,899],
    [2095.7,895.3,2109.3,895.3],[2256.4,907.3,2273.6,907.3],[2291,907.3,2309.3,907.3],[2256.4,907.3,2273.6,935.3,14],
    [2348.2,907,2354.3,866,30],[2256.4,942.3,2273.6,942.3],[2311.8,942.3,2327.5,942.3]];
  for (const [a, b, c, d, k = 0] of wires)
    s += `<path d="M${a} ${b}C${a + k} ${b} ${c - k} ${d} ${c} ${d}" fill="none" stroke="#222" stroke-opacity=".72" stroke-width="1.150"/>`;

  const node = (a, b, c, d, fill = 'url(#nd)') => `<rect x="${a}" y="${b}" width="${c - a}" height="${d - b}" rx="1.200" fill="${fill}" stroke="#333" stroke-width="1.300"/>`;
  for (const n of [[1576,592.7,1594,601.3],[1637.8,592,1682,602.3],[1660.7,639.3,1711.2,669],[1736.7,614,1754.6,622.7],[1850.5,614,1898.5,643.3],
    [1954.6,616.7,1998,626.7],[2034.7,617.3,2088.8,633],[2113.3,617.3,2147.4,639.7],[1998,685.3,2049.5,701],[1802.6,685.3,1850.5,708.3],
    [1802.6,719.3,1850.5,741.7],[1802.6,754.3,1850.5,777],[1980.6,810.3,1998,818.7],[2023.2,806.7,2080.7,822.3],[2092.9,824,2126.4,834.3],
    [1954.3,839.3,1998.2,849.3],[2109.3,845.7,2126.8,854.3],[2156.8,844,2209.3,866.3],[2256.4,844,2273.6,852.7],[2291,844,2319.3,866.3],
    [1930.4,881,1947.5,889.3],[2045,881,2095.7,910],[2109.3,891.3,2126.4,899.7],[2211.8,899.3,2256.4,914.7],[2309.3,902.3,2348.2,912.3],[2273.6,931,2311.8,953.7]]) s += node(...n);
  for (const n of [[1498.5,508.3,1524,518.3],[1537.8,508.3,1572,518.3],[1582.7,508.3,1614.3,518.3],[1754.6,648.3,1780.6,653.7],[1898.5,691.7,1947.4,701.7],[2273.6,903,2291,911.3]]) s += node(...n, '#8f8e9c');
  s += `<path d="M1754.600 647.500v7M1756 647.500v7M1779.500 647.500v7" stroke="#111" stroke-width="2"/>`;
  s += node(2256.4, 858.7, 2273.6, 865.7, '#fff75a');
  for (const [a, b, c, d, k] of [[1562.2,647.3,1635.2,654.3,1569.4],[1562.2,654.7,1635.2,661.3,1578.6],[1729,700,1783.7,707.3,1742.3],[1729,734,1783.7,741,1742.3],
    [1729,769.3,1783.7,776.3,1742.3],[1947.5,888.7,2020.4,895.3,1955.4],[1947.5,895.7,2020.4,902.3,1963.6],[2183.2,939,2256.4,946,2214.6]])
    s += node(a, b, c, d) + node(a, b, k, d, '#8a899a');
  s += node(1434.7, 509.3, 1488.3, 517.3, '#8f8e9c') + node(1471, 509.3, 1488.3, 517.3, '#2c2c2c');
  for (const [a, b, c, d, t] of [[2092.9,772.7,2134.3,809.7,'道路长度'],[2156.8,772.7,2238.6,809.7,'点坐标'],[2273.6,772.7,2329.3,813.3,'GIS数据'],[2354.3,844,2391.4,887,'建筑到道路距离'],[2327.5,924.7,2383.2,959.7,'Panel']])
    s += node(a, b, c, d, '#fff75a') + node(a, b, c, b + 6, '#c9c23c') + `<text x="${(a + c) / 2}" y="${b + 4.8}" font-size="5" text-anchor="middle" fill="#222">${t}</text>`;
  document.getElementById('graph').innerHTML = s;
})();
```
